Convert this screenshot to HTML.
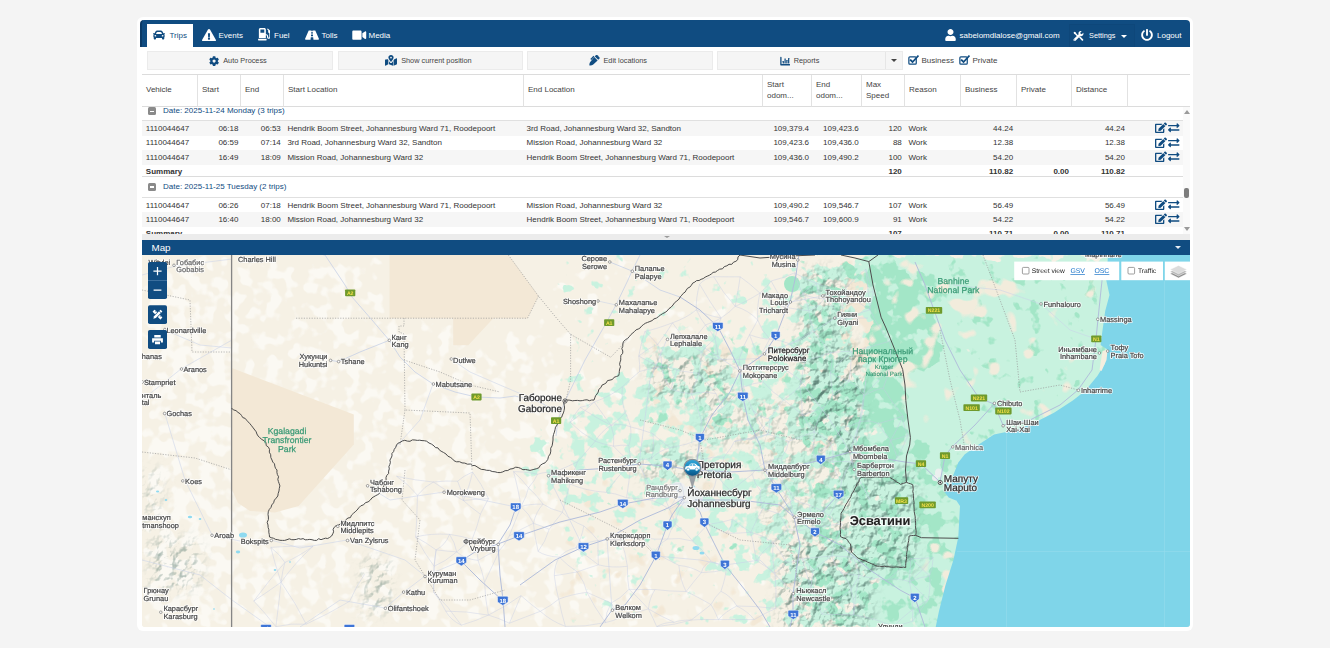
<!DOCTYPE html>
<html lang="en">
<head>
<meta charset="utf-8">
<title>Trips</title>
<style>
*{box-sizing:border-box;margin:0;padding:0}
html,body{width:1330px;height:648px;overflow:hidden;background:#f4f4f4;font-family:"Liberation Sans",Arial,sans-serif;font-size:8px;color:#333}
.abs{position:absolute}
#card{position:absolute;left:137px;top:17px;width:1056px;height:614px;background:#fff;border-radius:6px}
#hdr{position:absolute;left:140px;top:20px;width:1050px;height:27px;background:#104c81;border-radius:4px 4px 0 0;border-left:2px solid #0b3a66}
.tab{position:absolute;top:24px;height:23px;color:#fff;font-size:8px;line-height:23px;white-space:nowrap}
.tab.act{background:#fff;color:#104c81;left:147px;width:46px}
.tab svg{position:absolute}
.tab span{position:absolute;top:0}
.tbtn{position:absolute;top:51px;height:19px;padding-right:4px;background:#f5f5f5;border:1px solid #ebebeb;font-size:7.33px;line-height:17px;color:#444;text-align:center;white-space:nowrap}
.tbtn svg{vertical-align:-2px;margin-right:5px}
#grid{position:absolute;left:142px;top:74px;width:1048px;height:160px;overflow:hidden;background:#fff;border-top:1px solid #dcdcdc}
.gh{position:absolute;top:0;height:32px;padding-bottom:1.5px;border-right:1px solid #e2e2e2;border-bottom:1px solid #dcdcdc;font-size:8px;color:#444;padding-left:4px;display:flex;align-items:center;line-height:11px}
.row{position:absolute;left:0;width:1041px;height:15px;font-size:8px;line-height:15px;color:#333;white-space:nowrap}
.row.alt{background:#f6f6f6}
.row span{position:absolute;top:0}
.r{text-align:right}
.grp{position:absolute;left:0;width:1041px;color:#104c81;font-size:8px;border-bottom:1px solid #e0e0e0}
.sum{font-weight:bold}
.ic{position:absolute;top:1.2px;width:12px;height:11.5px;fill:#104c81;color:#104c81}
.minus{position:absolute;left:6px;width:8px;height:8px;background:#8a8a8a;border-radius:1.5px}
.minus:after{content:"";position:absolute;left:1.8px;top:3.2px;width:4.4px;height:1.6px;background:#fff}
.tic{position:absolute;fill:currentColor;color:inherit}
.mbtn{position:absolute;left:148px;width:19px;height:18px;background:#104c81;border-radius:1.5px}
</style>
</head>
<body>
<svg width="0" height="0" style="position:absolute">
<defs>
<path id="i-car" d="M499.990 176h-59.870l-16.640-41.600C406.380 91.630 365.570 64 319.500 64h-127c-46.060 0-86.880 27.630-103.990 70.400L71.870 176H12.010C4.200 176-1.530 183.340.370 190.910l6 24C7.700 220.250 12.500 224 18.010 224h20.070C24.650 235.730 16 252.780 16 272v48c0 16.120 6.160 30.670 16 41.930V416c0 17.670 14.330 32 32 32h32c17.670 0 32-14.330 32-32v-32h256v32c0 17.670 14.330 32 32 32h32c17.670 0 32-14.330 32-32v-54.070c9.840-11.250 16-25.800 16-41.930v-48c0-19.220-8.650-36.270-22.070-48H494c5.510 0 10.310-3.750 11.640-9.090l6-24c1.890-7.570-3.840-14.910-11.650-14.910zm-352.060-17.830c7.290-18.220 24.940-30.170 44.570-30.170h127c19.630 0 37.280 11.950 44.570 30.170L384 208H128l19.930-49.830zM96 319.800c-19.200 0-32-12.760-32-31.900S76.800 256 96 256s48 28.710 48 47.850-28.800 15.950-48 15.950zm320 0c-19.200 0-48 3.190-48-15.950S396.800 256 416 256s32 12.760 32 31.900-12.800 31.900-32 31.900z"/>
<path id="i-warn" d="M569.517 440.013C587.975 472.007 564.806 512 527.940 512H48.054c-36.937 0-59.999-40.055-41.577-71.987L246.423 23.985c18.467-32.009 64.720-31.951 83.154 0l239.940 416.028zM288 354c-25.405 0-46 20.595-46 46s20.595 46 46 46 46-20.595 46-46-20.595-46-46-46zm-43.673-165.346l7.418 136c.347 6.364 5.609 11.346 11.982 11.346h48.546c6.373 0 11.635-4.982 11.982-11.346l7.418-136c.375-6.874-5.098-12.654-11.982-12.654h-63.383c-6.884 0-12.356 5.780-11.981 12.654z"/>
<path id="i-fuel" d="M336 448H16c-8.800 0-16 7.200-16 16v32c0 8.800 7.200 16 16 16h320c8.800 0 16-7.200 16-16v-32c0-8.800-7.200-16-16-16zm157.200-340.700l-81-81c-6.200-6.200-16.400-6.200-22.600 0l-11.300 11.300c-6.200 6.200-6.200 16.400 0 22.600L416 97.900V160c0 28.100 20.900 51.300 48 55.200V376c0 13.200-10.800 24-24 24s-24-10.800-24-24v-32c0-48.600-39.400-88-88-88h-8V64c0-35.300-28.700-64-64-64H96C60.700 0 32 28.700 32 64v352h288V304h8c22.100 0 40 17.900 40 40v27.800c0 37.700 27 72 64.500 75.900 43 4.300 79.500-29.500 79.500-71.700V152.600c0-17-6.800-33.300-18.800-45.300zM256 192H96V64h160v128z"/>
<path id="i-road" d="M573.190 402.670l-139.790-320C428.430 71.290 417.600 64 405.680 64h-97.590l2.450 23.160c.5 4.720-3.210 8.840-7.960 8.840h-29.160c-4.750 0-8.460-4.120-7.960-8.840L267.910 64h-97.590c-11.930 0-22.760 7.290-27.730 18.670L2.800 402.670C-6.450 423.860 8.310 448 30.540 448h196.840l10.310-97.680c.86-8.140 7.720-14.320 15.910-14.320h68.800c8.190 0 15.050 6.180 15.910 14.320L348.620 448h196.840c22.230 0 36.990-24.140 27.730-45.330zM260.400 135.160a8 8 0 0 1 7.960-7.160h39.290c4.090 0 7.530 3.090 7.960 7.160l4.600 43.580c.75 7.090-4.810 13.260-11.930 13.260h-40.540c-7.130 0-12.680-6.170-11.930-13.260l4.590-43.580zM315.640 304h-55.290c-9.500 0-16.910-8.230-15.910-17.680l5.070-48c.86-8.140 7.720-14.320 15.910-14.320h45.150c8.190 0 15.050 6.180 15.910 14.320l5.070 48c1 9.450-6.410 17.680-15.910 17.680z"/>
<path id="i-video" d="M336.200 64H47.800C21.400 64 0 85.400 0 111.800v288.400C0 426.600 21.400 448 47.800 448h288.400c26.400 0 47.800-21.400 47.800-47.800V111.800c0-26.400-21.400-47.800-47.800-47.800zm189.400 37.700L416 177.300v157.400l109.600 75.500c21.200 14.600 50.400-.3 50.400-25.800V127.500c0-25.400-29.100-40.400-50.400-25.800z"/>
<path id="i-user" d="M224 256c70.700 0 128-57.300 128-128S294.700 0 224 0 96 57.300 96 128s57.300 128 128 128zm89.600 32h-16.700c-22.200 10.200-46.900 16-72.900 16s-50.600-5.800-72.900-16h-16.700C60.200 288 0 348.200 0 422.400V464c0 26.500 21.500 48 48 48h352c26.500 0 48-21.500 48-48v-41.600c0-74.200-60.200-134.400-134.400-134.400z"/>
<path id="i-power" d="M400 54.100c63 45 104 118.600 104 201.900 0 136.800-110.800 247.700-247.500 248C120 504.300 8.200 393 8 256.400 7.900 173.100 48.900 99.300 111.800 54.200c11.700-8.300 28-4.800 35 7.700L162.600 90c5.900 10.500 3.100 23.800-6.600 31-41.500 30.800-68 79.600-68 134.900-.1 92.300 74.500 168.100 168 168.100 91.600 0 168.600-74.200 168-169.100-.3-51.800-24.700-101.800-68.100-134-9.700-7.200-12.400-20.500-6.500-30.900l15.800-28.100c7-12.400 23.200-16.100 34.800-7.800zM296 264V24c0-13.300-10.700-24-24-24h-32c-13.300 0-24 10.700-24 24v240c0 13.300 10.700 24 24 24h32c13.300 0 24-10.700 24-24z"/>
<path id="i-cog" d="M487.400 315.700l-42.600-24.600c4.300-23.200 4.300-47 0-70.200l42.600-24.600c4.900-2.800 7.100-8.600 5.500-14-11.100-35.600-30-67.800-54.700-94.600-3.800-4.100-10-5.100-14.800-2.300L380.800 110c-17.900-15.400-38.500-27.300-60.800-35.100V25.800c0-5.600-3.900-10.500-9.400-11.700-36.700-8.200-74.300-7.800-109.200 0-5.500 1.200-9.400 6.100-9.400 11.700V75c-22.200 7.900-42.800 19.800-60.800 35.100L88.700 85.500c-4.900-2.800-11-1.900-14.800 2.300-24.700 26.700-43.600 58.900-54.700 94.600-1.700 5.400.6 11.200 5.500 14L67.300 221c-4.300 23.200-4.300 47 0 70.200l-42.600 24.600c-4.900 2.800-7.100 8.600-5.500 14 11.100 35.600 30 67.800 54.700 94.600 3.800 4.100 10 5.100 14.800 2.300l42.600-24.600c17.900 15.400 38.500 27.300 60.800 35.100v49.200c0 5.600 3.900 10.500 9.400 11.700 36.700 8.200 74.300 7.800 109.200 0 5.500-1.200 9.400-6.100 9.400-11.700v-49.200c22.200-7.900 42.800-19.800 60.800-35.100l42.600 24.600c4.900 2.800 11 1.900 14.800-2.300 24.700-26.700 43.600-58.900 54.700-94.600 1.500-5.500-.7-11.300-5.600-14.100zM256 336c-44.100 0-80-35.900-80-80s35.900-80 80-80 80 35.900 80 80-35.900 80-80 80z"/>
<path id="i-swap" d="M0 168v-16c0-13.255 10.745-24 24-24h360V80c0-21.367 25.899-32.042 40.971-16.971l80 80c9.372 9.373 9.372 24.569 0 33.941l-80 80C409.956 271.982 384 261.456 384 240v-48H24c-13.255 0-24-10.745-24-24zm488 152H128v-48c0-21.314-25.862-32.080-40.971-16.971l-80 80c-9.372 9.373-9.372 24.569 0 33.941l80 80C102.057 463.997 128 453.437 128 432v-48h360c13.255 0 24-10.745 24-24v-16c0-13.255-10.745-24-24-24z"/>
<path id="i-edit" d="M402.600 83.200l90.200 90.200c3.800 3.800 3.800 10 0 13.800L274.400 405.600l-92.800 10.300c-12.400 1.400-22.900-9.100-21.500-21.500l10.300-92.800L388.800 83.200c3.800-3.800 10-3.800 13.800 0zm162-22.900l-48.800-48.800c-15.200-15.200-39.900-15.200-55.200 0l-35.400 35.400c-3.800 3.800-3.800 10 0 13.800l90.200 90.200c3.800 3.800 10 3.800 13.800 0l35.400-35.400c15.200-15.300 15.200-40 0-55.200zM384 346.200V448H64V128h229.800c3.200 0 6.200-1.300 8.500-3.500l40-40c7.600-7.600 2.200-20.500-8.500-20.500H48C21.500 64 0 85.500 0 112v352c0 26.500 21.500 48 48 48h352c26.500 0 48-21.500 48-48V306.200c0-10.700-12.900-16-20.500-8.500l-40 40c-2.200 2.300-3.500 5.300-3.500 8.500z"/>
<g id="i-check"><rect x="30" y="90" width="360" height="360" rx="50" fill="none" stroke="currentColor" stroke-width="60"/><path d="M120 250l90 90L470 60" fill="none" stroke="currentColor" stroke-width="85" stroke-linecap="square"/></g>
<g id="i-chart"><path d="M45 70v370h430" fill="none" stroke="currentColor" stroke-width="66" stroke-linecap="round" stroke-linejoin="round"/><rect x="135" y="250" width="62" height="125" rx="10"/><rect x="225" y="120" width="62" height="255" rx="10"/><rect x="315" y="200" width="62" height="175" rx="10"/><rect x="405" y="100" width="62" height="275" rx="10"/></g>
<g id="i-tools"><path d="M60 40l70 20 30 60 130 130-50 50L110 170 50 140 30 70z"/><path d="M290 300l50-50 150 150c18 18 18 42 0 60s-42 18-60 0z"/><path d="M500 90l-70 70-60-20-20-60 70-70c-50-15-110 0-140 50-18 30-20 70-5 100L40 395c-25 25-25 60 0 82s57 25 82 0l235-235c30 15 70 13 100-5 50-30 62-95 43-147zM80 460a22 22 0 1 1 0-44 22 22 0 0 1 0 44z"/></g>
<g id="i-mapm"><path d="M288 0c-70 0-126 56-126 126 0 56 82 158 113 196 7 8 19 8 26 0 31-38 113-140 113-196C414 56 358 0 288 0zm0 168a42 42 0 1 1 0-84 42 42 0 0 1 0 84z"/><path d="M20 216c-12 5-20 17-20 30v250c0 11 11 19 22 15l138-63V236l-20-30zM192 300v148l192 64V300c-20 27-40 52-55 70-21 25-61 25-82 0-15-18-35-43-55-70zM554 161l-122 55c-5 18-13 36-23 54v242l147-59c12-5 20-17 20-30V176c0-11-11-19-22-15z"/></g>
<g id="i-pen"><path d="M497 105L407 15c-20-20-52-20-72 0l-55 55 162 162 55-55c20-20 20-52 0-72z"/><path d="M252 98L414 260 205 455c-45 40-110 60-185 50-10-75 10-140 50-185z"/><path d="M215 40l45 45L110 235l-45-45L190 65z"/></g>
</defs>
</svg>

<div id="card"></div>
<div id="hdr"></div>

<!-- tabs -->
<div class="tab act"><svg class="tic" style="left:6.2px;top:5.0px;width:12px;height:12px" viewBox="0 0 512 512"><use href="#i-car"/></svg><span style="left:22.5px">Trips</span></div>
<div class="tab" style="left:200px"><svg class="tic" style="left:2px;top:4.6px;width:14px;height:12.4px" viewBox="0 0 576 512"><use href="#i-warn"/></svg><span style="left:18.5px">Events</span></div>
<div class="tab" style="left:255px"><svg class="tic" style="left:2.6px;top:4.4px;width:12.6px;height:12.4px" viewBox="0 0 512 512"><use href="#i-fuel"/></svg><span style="left:19px">Fuel</span></div>
<div class="tab" style="left:302px"><svg class="tic" style="left:2.7px;top:5.3px;width:14px;height:12.4px" viewBox="0 0 576 512"><use href="#i-road"/></svg><span style="left:19.5px">Tolls</span></div>
<div class="tab" style="left:350px"><svg class="tic" style="left:2px;top:5.3px;width:14.5px;height:12.4px" viewBox="0 0 576 512"><use href="#i-video"/></svg><span style="left:18.5px">Media</span></div>
<div class="tab" style="left:944px"><svg class="tic" style="left:0.5px;top:4.8px;width:11px;height:12px" viewBox="0 0 448 512"><use href="#i-user"/></svg><span style="left:15.5px">sabelomdlalose@gmail.com</span></div>
<div class="tab" style="left:1069px;width:66px;background:#0f4a7e;border:1px solid #0e477a;border-bottom:0"><svg class="tic" style="left:3.3px;top:5.5px;width:10.5px;height:10.5px" viewBox="0 0 512 512"><use href="#i-tools"/></svg><i style="position:absolute;left:51px;top:9.5px;border:3.2px solid transparent;border-top:3.6px solid #fff;border-bottom:0"></i><span style="left:19px;font-size:7.33px;top:-1px">Settings</span></div>
<div class="tab" style="left:1140px"><svg class="tic" style="left:1px;top:4.6px;width:12px;height:12px" viewBox="0 0 512 512"><use href="#i-power"/></svg><span style="left:17px">Logout</span></div>

<!-- toolbar -->
<div class="tbtn" style="left:147px;width:186px"><svg style="width:10.2px;height:10.2px;fill:#104c81;color:#104c81;vertical-align:-2.7px;margin-right:3.8px" viewBox="0 0 512 512"><use href="#i-cog"/></svg>Auto Process</div>
<div class="tbtn" style="left:338px;width:185px"><svg style="width:12px;height:10.67px;fill:#104c81;color:#104c81;vertical-align:-2.7px;margin-right:3.8px" viewBox="0 0 576 512"><use href="#i-mapm"/></svg>Show current position</div>
<div class="tbtn" style="left:527px;width:186px"><svg style="width:10.67px;height:10.67px;fill:#104c81;color:#104c81;vertical-align:-2.7px;margin-right:3.8px" viewBox="0 0 512 512"><use href="#i-pen"/></svg>Edit locations</div>
<div class="tbtn" style="left:717px;width:186px;padding-right:21px"><svg style="width:10.2px;height:10.2px;fill:#104c81;color:#104c81;vertical-align:-2.7px;margin-right:3.8px" viewBox="0 0 512 512"><use href="#i-chart"/></svg>Reports</div>
<div class="abs" style="left:885px;top:52px;width:1px;height:17px;background:#e6e6e6"></div>
<i class="abs" style="left:891px;top:59px;border:3px solid transparent;border-top:3.6px solid #444;border-bottom:0"></i>
<svg class="abs" style="left:907.5px;top:55.2px;width:11px;height:10.5px;color:#104c81" viewBox="0 0 512 512"><use href="#i-check"/></svg>
<svg class="abs" style="left:959px;top:55.2px;width:11px;height:10.5px;color:#104c81" viewBox="0 0 512 512"><use href="#i-check"/></svg>
<div class="abs" style="left:921.5px;top:51px;line-height:19px;font-size:8px;color:#444">Business</div>
<div class="abs" style="left:972.5px;top:51px;line-height:19px;font-size:8px;color:#444">Private</div>

<!-- grid -->
<div id="grid">
  <div class="gh" style="left:0;width:56px">Vehicle</div>
  <div class="gh" style="left:56px;width:43px">Start</div>
  <div class="gh" style="left:99px;width:43px">End</div>
  <div class="gh" style="left:142px;width:240px">Start Location</div>
  <div class="gh" style="left:382px;width:239px">End Location</div>
  <div class="gh" style="left:621px;width:49px">Start<br>odom...</div>
  <div class="gh" style="left:670px;width:50px">End<br>odom...</div>
  <div class="gh" style="left:720px;width:43px">Max<br>Speed</div>
  <div class="gh" style="left:763px;width:56px">Reason</div>
  <div class="gh" style="left:819px;width:56px">Business</div>
  <div class="gh" style="left:875px;width:55px">Private</div>
  <div class="gh" style="left:930px;width:56px">Distance</div>
  <div class="gh" style="left:986px;width:62px;border-right:0"></div>
<div class="grp" style="top:32.00px;height:13.67px"><i class="minus" style="top:0.40px"></i><span style="position:absolute;left:21px;top:-0.70px;line-height:10px">Date: 2025-11-24 Monday (3 trips)</span></div>
<div class="row alt" style="top:45.67px"><span style="left:3.8px">1110044647</span><span class="r" style="right:944.6px">06:18</span><span class="r" style="right:902.2px">06:53</span><span style="left:145.4px">Hendrik Boom Street, Johannesburg Ward 71, Roodepoort</span><span style="left:384.5px">3rd Road, Johannesburg Ward 32, Sandton</span><span class="r" style="right:374.0px">109,379.4</span><span class="r" style="right:324.3px">109,423.6</span><span class="r" style="right:281.2px">120</span><span style="left:766.4px">Work</span><span class="r" style="right:169.9px">44.24</span><span class="r" style="right:58.1px">44.24</span><svg class="ic" style="left:1012.5px" viewBox="0 0 576 512"><use href="#i-edit"/></svg><svg class="ic" style="left:1026.2px;width:11.5px" viewBox="0 0 512 512"><use href="#i-swap"/></svg></div>
<div class="row" style="top:60.33px"><span style="left:3.8px">1110044647</span><span class="r" style="right:944.6px">06:59</span><span class="r" style="right:902.2px">07:14</span><span style="left:145.4px">3rd Road, Johannesburg Ward 32, Sandton</span><span style="left:384.5px">Mission Road, Johannesburg Ward 32</span><span class="r" style="right:374.0px">109,423.6</span><span class="r" style="right:324.3px">109,436.0</span><span class="r" style="right:281.2px">88</span><span style="left:766.4px">Work</span><span class="r" style="right:169.9px">12.38</span><span class="r" style="right:58.1px">12.38</span><svg class="ic" style="left:1012.5px" viewBox="0 0 576 512"><use href="#i-edit"/></svg><svg class="ic" style="left:1026.2px;width:11.5px" viewBox="0 0 512 512"><use href="#i-swap"/></svg></div>
<div class="row alt" style="top:75.00px"><span style="left:3.8px">1110044647</span><span class="r" style="right:944.6px">16:49</span><span class="r" style="right:902.2px">18:09</span><span style="left:145.4px">Mission Road, Johannesburg Ward 32</span><span style="left:384.5px">Hendrik Boom Street, Johannesburg Ward 71, Roodepoort</span><span class="r" style="right:374.0px">109,436.0</span><span class="r" style="right:324.3px">109,490.2</span><span class="r" style="right:281.2px">100</span><span style="left:766.4px">Work</span><span class="r" style="right:169.9px">54.20</span><span class="r" style="right:58.1px">54.20</span><svg class="ic" style="left:1012.5px" viewBox="0 0 576 512"><use href="#i-edit"/></svg><svg class="ic" style="left:1026.2px;width:11.5px" viewBox="0 0 512 512"><use href="#i-swap"/></svg></div>
<div class="row sum" style="top:89.67px;height:12.67px;line-height:13px;border-bottom:1px solid #dcdcdc"><span style="left:3.8px">Summary</span><span class="r" style="right:281.2px">120</span><span class="r" style="right:169.9px">110.82</span><span class="r" style="right:114.0px">0.00</span><span class="r" style="right:58.1px">110.82</span></div>
<div class="grp" style="top:102.33px;height:20.67px"><i class="minus" style="top:5.97px"></i><span style="position:absolute;left:21px;top:4.87px;line-height:10px">Date: 2025-11-25 Tuesday (2 trips)</span></div>
<div class="row" style="top:122.60px"><span style="left:3.8px">1110044647</span><span class="r" style="right:944.6px">06:26</span><span class="r" style="right:902.2px">07:18</span><span style="left:145.4px">Hendrik Boom Street, Johannesburg Ward 71, Roodepoort</span><span style="left:384.5px">Mission Road, Johannesburg Ward 32</span><span class="r" style="right:374.0px">109,490.2</span><span class="r" style="right:324.3px">109,546.7</span><span class="r" style="right:281.2px">107</span><span style="left:766.4px">Work</span><span class="r" style="right:169.9px">56.49</span><span class="r" style="right:58.1px">56.49</span><svg class="ic" style="left:1012.5px" viewBox="0 0 576 512"><use href="#i-edit"/></svg><svg class="ic" style="left:1026.2px;width:11.5px" viewBox="0 0 512 512"><use href="#i-swap"/></svg></div>
<div class="row alt" style="top:137.20px"><span style="left:3.8px">1110044647</span><span class="r" style="right:944.6px">16:40</span><span class="r" style="right:902.2px">18:00</span><span style="left:145.4px">Mission Road, Johannesburg Ward 32</span><span style="left:384.5px">Hendrik Boom Street, Johannesburg Ward 71, Roodepoort</span><span class="r" style="right:374.0px">109,546.7</span><span class="r" style="right:324.3px">109,600.9</span><span class="r" style="right:281.2px">91</span><span style="left:766.4px">Work</span><span class="r" style="right:169.9px">54.22</span><span class="r" style="right:58.1px">54.22</span><svg class="ic" style="left:1012.5px" viewBox="0 0 576 512"><use href="#i-edit"/></svg><svg class="ic" style="left:1026.2px;width:11.5px" viewBox="0 0 512 512"><use href="#i-swap"/></svg></div>
<div class="row sum" style="top:152.00px;height:12.67px;line-height:13px;border-bottom:1px solid #dcdcdc"><span style="left:3.8px">Summary</span><span class="r" style="right:281.2px">107</span><span class="r" style="right:169.9px">110.71</span><span class="r" style="right:114.0px">0.00</span><span class="r" style="right:58.1px">110.71</span></div>
<div class="abs" style="left:1041px;top:32px;width:7px;height:128px;background:#fafafa"></div><i class="abs" style="left:1041.6px;top:34.6px;border:3px solid transparent;border-bottom:4px solid #9a9a9a;border-top:0"></i><i class="abs" style="left:1041.6px;top:152px;border:3px solid transparent;border-top:4px solid #9a9a9a;border-bottom:0"></i><div class="abs" style="left:1042px;top:113px;width:5px;height:10px;background:#7d7d7d;border-radius:2px"></div>
</div>

<!-- splitter + map header -->
<div class="abs" style="left:142px;top:234px;width:1048px;height:6px;background:#ececec"></div>
<div class="abs" style="left:142px;top:240px;width:1048px;height:15px;background:#104c81;color:#fff;font-size:9.8px;line-height:15.6px;padding-left:9.5px">Map</div>

<!-- map -->
<div id="map" class="abs" style="opacity:.999;left:142px;top:255px;width:1048px;height:372px;background:#f5f1e6;overflow:hidden;border-radius:0 0 3px 3px"><svg width="1048" height="372" viewBox="142 255 1048 372" style="position:absolute;left:0;top:0;text-rendering:geometricPrecision;font-family:'Liberation Sans',Arial,sans-serif">
<defs>
<filter id="fpale" filterUnits="userSpaceOnUse" x="142" y="255" width="1048" height="372" color-interpolation-filters="sRGB">
<feGaussianBlur in="SourceGraphic" stdDeviation="8" result="d"/>
<feTurbulence type="fractalNoise" baseFrequency="0.075" numOctaves="2" seed="3" result="n"/>
<feColorMatrix in="n" type="matrix" values="0 0 0 0 0 0 0 0 0 0 0 0 0 0 0 1 0 0 0 0" result="na"/>
<feComposite in="na" in2="d" operator="arithmetic" k1="0" k2="1" k3="1" k4="-0.5" result="s"/>
<feComponentTransfer in="s" result="t"><feFuncA type="linear" slope="8" intercept="-3.5"/></feComponentTransfer>
<feFlood flood-color="#fbf9f3" flood-opacity="1" result="f"/>
<feComposite in="f" in2="t" operator="in"/>
</filter>
<filter id="flg" filterUnits="userSpaceOnUse" x="142" y="255" width="1048" height="372" color-interpolation-filters="sRGB">
<feGaussianBlur in="SourceGraphic" stdDeviation="7" result="d"/>
<feTurbulence type="fractalNoise" baseFrequency="0.075" numOctaves="3" seed="11" result="n"/>
<feColorMatrix in="n" type="matrix" values="0 0 0 0 0 0 0 0 0 0 0 0 0 0 0 1 0 0 0 0" result="na"/>
<feComposite in="na" in2="d" operator="arithmetic" k1="0" k2="1" k3="1" k4="-0.5" result="s"/>
<feComponentTransfer in="s" result="t"><feFuncA type="linear" slope="11" intercept="-5.0"/></feComponentTransfer>
<feFlood flood-color="#c8f2df" flood-opacity="1" result="f"/>
<feComposite in="f" in2="t" operator="in"/>
</filter>
<filter id="fmg" filterUnits="userSpaceOnUse" x="142" y="255" width="1048" height="372" color-interpolation-filters="sRGB">
<feGaussianBlur in="SourceGraphic" stdDeviation="6" result="d"/>
<feTurbulence type="fractalNoise" baseFrequency="0.07" numOctaves="3" seed="23" result="n"/>
<feColorMatrix in="n" type="matrix" values="0 0 0 0 0 0 0 0 0 0 0 0 0 0 0 1 0 0 0 0" result="na"/>
<feComposite in="na" in2="d" operator="arithmetic" k1="0" k2="1" k3="1" k4="-0.5" result="s"/>
<feComponentTransfer in="s" result="t"><feFuncA type="linear" slope="11" intercept="-5.0"/></feComponentTransfer>
<feFlood flood-color="#a3e6c7" flood-opacity="1" result="f"/>
<feComposite in="f" in2="t" operator="in"/>
</filter>
<filter id="ftan" filterUnits="userSpaceOnUse" x="142" y="255" width="1048" height="372" color-interpolation-filters="sRGB">
<feGaussianBlur in="SourceGraphic" stdDeviation="6" result="d"/>
<feTurbulence type="fractalNoise" baseFrequency="0.06" numOctaves="2" seed="5" result="n"/>
<feColorMatrix in="n" type="matrix" values="0 0 0 0 0 0 0 0 0 0 0 0 0 0 0 1 0 0 0 0" result="na"/>
<feComposite in="na" in2="d" operator="arithmetic" k1="0" k2="1" k3="1" k4="-0.5" result="s"/>
<feComponentTransfer in="s" result="t"><feFuncA type="linear" slope="10" intercept="-4.5"/></feComponentTransfer>
<feFlood flood-color="#f3e8d6" flood-opacity="1" result="f"/>
<feComposite in="f" in2="t" operator="in"/>
</filter>
<filter id="fhill" filterUnits="userSpaceOnUse" x="142" y="255" width="1048" height="372" color-interpolation-filters="sRGB">
<feGaussianBlur in="SourceGraphic" stdDeviation="6" result="d"/>
<feTurbulence type="fractalNoise" baseFrequency="0.12" numOctaves="4" seed="41" result="n"/>
<feDiffuseLighting in="n" surfaceScale="4.5" diffuseConstant="1" lighting-color="#ffffff" result="l"><feDistantLight azimuth="225" elevation="50"/></feDiffuseLighting>
<feColorMatrix in="l" type="matrix" values="0 0 0 0 0.30 0 0 0 0 0.44 0 0 0 0 0.40 -1.3 0 0 0 0.96" result="sh"/>
<feComposite in="sh" in2="d" operator="in"/>
</filter>
<filter id="ftan2" filterUnits="userSpaceOnUse" x="142" y="255" width="1048" height="372" color-interpolation-filters="sRGB">
<feGaussianBlur in="SourceGraphic" stdDeviation="5" result="d"/>
<feTurbulence type="fractalNoise" baseFrequency="0.05" numOctaves="2" seed="77" result="n"/>
<feColorMatrix in="n" type="matrix" values="0 0 0 0 0 0 0 0 0 0 0 0 0 0 0 1 0 0 0 0" result="na"/>
<feComposite in="na" in2="d" operator="arithmetic" k1="0" k2="1" k3="1" k4="-0.5" result="s"/>
<feComponentTransfer in="s" result="t"><feFuncA type="linear" slope="11" intercept="-5.0"/></feComponentTransfer>
<feFlood flood-color="#f2ecdc" flood-opacity="1" result="f"/>
<feComposite in="f" in2="t" operator="in"/>
</filter>
<linearGradient id="mk" x1="0" y1="0" x2="0" y2="1"><stop offset="0" stop-color="#35a9da"/><stop offset="0.5" stop-color="#1684bb"/><stop offset="1" stop-color="#084f80"/></linearGradient>
</defs>
<rect x="142" y="255" width="1048" height="372" fill="#f6f1e5"/>
<g filter="url(#fpale)">
<path fill="#000" fill-opacity="0.20" d="M638 439h8v8h-8z"/>
<path fill="#000" fill-opacity="0.25" d="M566 439h72v8h-72z"/>
<path fill="#000" fill-opacity="0.30" d="M646 255h8v8h-8zM646 263h8v8h-8zM646 271h8v8h-8zM646 279h8v8h-8zM654 287h120v8h-120zM766 295h8v8h-8zM766 303h8v8h-8zM766 311h8v8h-8zM470 319h72v8h-72zM766 319h8v8h-8zM766 327h8v8h-8zM766 335h8v8h-8zM766 343h8v8h-8zM638 351h8v8h-8zM638 359h8v8h-8zM638 367h8v8h-8zM638 375h8v8h-8zM638 383h8v8h-8zM638 391h8v8h-8zM638 399h8v8h-8zM638 407h8v8h-8zM638 415h8v8h-8zM638 423h8v8h-8zM638 431h8v8h-8zM638 535h144v8h-144zM646 623h136v8h-136z"/>
<path fill="#000" fill-opacity="0.35" d="M542 255h104v8h-104zM542 263h104v8h-104zM542 271h104v8h-104zM542 279h104v8h-104zM542 287h112v8h-112zM542 295h224v8h-224zM542 303h224v8h-224zM542 311h224v8h-224zM542 319h224v8h-224zM470 327h296v8h-296zM470 335h296v8h-296zM558 343h208v8h-208zM566 351h72v8h-72zM566 359h72v8h-72zM566 367h72v8h-72zM566 375h72v8h-72zM566 383h72v8h-72zM566 391h72v8h-72zM566 399h72v8h-72zM566 407h72v8h-72zM566 415h72v8h-72zM566 423h72v8h-72zM566 431h72v8h-72zM566 535h72v8h-72zM638 543h144v8h-144zM638 551h144v8h-144zM638 559h144v8h-144zM638 567h144v8h-144zM638 575h144v8h-144zM638 583h144v8h-144zM638 591h144v8h-144zM638 599h144v8h-144zM638 607h144v8h-144zM638 615h144v8h-144zM638 623h8v8h-8z"/>
<path fill="#000" fill-opacity="0.40" d="M382 255h8v8h-8zM382 263h8v8h-8zM382 271h8v8h-8zM382 279h8v8h-8zM382 287h8v8h-8zM382 295h8v8h-8zM382 303h8v8h-8zM382 311h8v8h-8zM390 319h80v8h-80zM470 343h88v8h-88zM558 351h8v8h-8zM558 359h8v8h-8zM558 367h8v8h-8zM558 375h8v8h-8zM558 383h8v8h-8zM558 391h8v8h-8zM558 399h8v8h-8zM558 407h8v8h-8zM558 415h8v8h-8zM558 423h8v8h-8zM558 431h8v8h-8zM558 439h8v8h-8zM558 447h8v8h-8zM558 455h8v8h-8zM558 463h8v8h-8zM558 471h8v8h-8zM558 479h8v8h-8zM558 487h8v8h-8zM558 495h8v8h-8zM558 503h8v8h-8zM558 511h8v8h-8zM558 519h8v8h-8zM558 527h8v8h-8zM558 535h8v8h-8zM238 623h400v8h-400z"/>
<path fill="#000" fill-opacity="0.45" d="M230 255h152v8h-152zM230 263h152v8h-152zM230 271h152v8h-152zM230 279h152v8h-152zM230 287h152v8h-152zM230 295h152v8h-152zM230 303h152v8h-152zM230 311h152v8h-152zM230 319h160v8h-160zM230 327h240v8h-240zM230 335h240v8h-240zM230 343h240v8h-240zM230 351h328v8h-328zM230 359h328v8h-328zM230 367h328v8h-328zM230 375h328v8h-328zM230 383h328v8h-328zM230 391h328v8h-328zM230 399h328v8h-328zM230 407h328v8h-328zM230 415h328v8h-328zM230 423h328v8h-328zM230 431h328v8h-328zM230 439h328v8h-328zM230 447h328v8h-328zM230 455h328v8h-328zM230 463h328v8h-328zM230 471h328v8h-328zM230 479h328v8h-328zM230 487h328v8h-328zM230 495h328v8h-328zM230 503h328v8h-328zM230 511h328v8h-328zM230 519h328v8h-328zM230 527h328v8h-328zM230 535h328v8h-328zM230 543h408v8h-408zM230 551h408v8h-408zM230 559h408v8h-408zM230 567h408v8h-408zM230 575h408v8h-408zM230 583h408v8h-408zM230 591h408v8h-408zM230 599h408v8h-408zM230 607h408v8h-408zM230 615h408v8h-408zM142 623h96v8h-96z"/>
<path fill="#000" fill-opacity="0.50" d="M142 255h88v8h-88zM142 263h88v8h-88zM142 271h88v8h-88zM142 279h88v8h-88zM142 287h88v8h-88zM142 295h88v8h-88zM142 303h88v8h-88zM142 311h88v8h-88zM142 319h88v8h-88zM142 327h88v8h-88zM142 335h88v8h-88zM142 343h88v8h-88zM142 351h88v8h-88zM142 359h88v8h-88zM142 367h88v8h-88zM142 375h88v8h-88zM142 383h88v8h-88zM142 391h88v8h-88zM142 399h88v8h-88zM142 407h88v8h-88zM142 415h88v8h-88zM142 423h88v8h-88zM142 431h88v8h-88zM142 439h88v8h-88zM142 447h88v8h-88zM142 455h88v8h-88zM142 463h88v8h-88zM142 471h88v8h-88zM142 479h88v8h-88zM142 487h88v8h-88zM142 495h88v8h-88zM142 503h88v8h-88zM142 511h88v8h-88zM142 519h88v8h-88zM142 527h88v8h-88zM142 535h88v8h-88zM142 543h88v8h-88zM142 551h88v8h-88zM142 559h88v8h-88zM142 567h88v8h-88zM142 575h88v8h-88zM142 583h88v8h-88zM142 591h88v8h-88zM142 599h88v8h-88zM142 607h88v8h-88zM142 615h88v8h-88z"/>
</g>
<polygon points="389.5,255.0 508.4,255.0 538.5,296.1 527.5,318.2 493.4,318.2 468.3,345.3 453.2,345.3 453.2,318.2 389.5,318.2" fill="#f3e8d6"/>
<polygon points="231.8,368.0 353.8,414.4 353.8,444.6 298.6,506.0 275.0,512.5 250.0,511.0 238.0,503.0 232.0,490.0" fill="#f3e8d6"/>
<g filter="url(#ftan)">
<path fill="#000" fill-opacity="0.20" d="M870 447h8v8h-8z"/>
<path fill="#000" fill-opacity="0.25" d="M638 335h8v8h-8zM870 383h8v8h-8zM870 391h8v8h-8zM870 399h8v8h-8zM870 407h8v8h-8zM870 415h8v8h-8zM870 423h8v8h-8zM870 431h8v8h-8zM870 439h8v8h-8zM798 455h8v8h-8zM798 463h8v8h-8zM798 471h8v8h-8zM798 479h8v8h-8zM798 487h8v8h-8zM798 495h8v8h-8zM798 503h8v8h-8zM798 511h8v8h-8zM798 519h8v8h-8zM798 527h8v8h-8zM798 535h8v8h-8zM798 543h8v8h-8zM798 551h8v8h-8zM798 559h8v8h-8zM798 567h8v8h-8zM798 575h8v8h-8zM798 583h8v8h-8zM798 591h8v8h-8zM798 599h8v8h-8zM798 607h8v8h-8zM798 615h8v8h-8zM558 623h8v8h-8zM798 623h8v8h-8z"/>
<path fill="#000" fill-opacity="0.30" d="M646 335h192v8h-192zM638 343h8v8h-8zM638 351h8v8h-8zM638 359h8v8h-8zM638 367h8v8h-8zM638 375h8v8h-8zM638 383h8v8h-8zM638 391h8v8h-8zM638 399h8v8h-8zM638 407h8v8h-8zM638 415h8v8h-8zM638 423h8v8h-8zM638 431h8v8h-8zM558 439h248v8h-248zM558 447h312v8h-312zM558 455h240v8h-240zM558 463h240v8h-240zM558 471h240v8h-240zM558 479h240v8h-240zM558 487h240v8h-240zM558 495h240v8h-240zM558 503h240v8h-240zM558 511h240v8h-240zM558 519h240v8h-240zM558 527h240v8h-240zM558 535h240v8h-240zM558 543h240v8h-240zM558 551h240v8h-240zM558 559h240v8h-240zM558 567h240v8h-240zM558 575h240v8h-240zM558 583h240v8h-240zM558 591h240v8h-240zM558 599h240v8h-240zM558 607h240v8h-240zM558 615h240v8h-240zM566 623h232v8h-232z"/>
<path fill="#000" fill-opacity="0.35" d="M646 343h192v8h-192zM646 351h200v8h-200zM646 359h200v8h-200zM646 367h200v8h-200zM646 375h200v8h-200zM878 375h8v8h-8zM646 383h224v8h-224zM646 391h224v8h-224zM646 399h224v8h-224zM646 407h224v8h-224zM646 415h224v8h-224zM646 423h224v8h-224zM646 431h224v8h-224zM806 439h64v8h-64z"/>
<path fill="#000" fill-opacity="0.40" d="M838 255h8v8h-8zM838 263h8v8h-8zM838 271h8v8h-8zM838 279h8v8h-8zM838 287h8v8h-8zM838 295h8v8h-8zM838 303h8v8h-8zM838 311h8v8h-8zM838 319h8v8h-8zM838 327h8v8h-8zM838 335h8v8h-8zM838 343h8v8h-8zM878 351h8v8h-8zM878 359h8v8h-8zM878 367h8v8h-8z"/>
<path fill="#000" fill-opacity="0.45" d="M886 343h16v8h-16zM846 375h8v8h-8z"/>
<path fill="#000" fill-opacity="0.50" d="M878 343h8v8h-8zM846 351h8v8h-8zM846 359h8v8h-8zM846 367h8v8h-8z"/>
<path fill="#000" fill-opacity="0.55" d="M846 343h8v8h-8zM854 375h24v8h-24z"/>
<path fill="#000" fill-opacity="0.60" d="M846 255h56v8h-56zM846 263h56v8h-56zM846 271h56v8h-56zM846 279h56v8h-56zM846 287h56v8h-56zM846 295h56v8h-56zM846 303h56v8h-56zM846 311h56v8h-56zM846 319h56v8h-56zM846 327h56v8h-56zM846 335h56v8h-56zM854 343h24v8h-24zM854 351h24v8h-24zM854 359h24v8h-24zM854 367h24v8h-24z"/>
</g>
<g filter="url(#flg)">
<path fill="#000" fill-opacity="0.20" d="M558 335h8v8h-8zM558 343h8v8h-8zM558 351h8v8h-8zM558 359h8v8h-8zM558 367h8v8h-8z"/>
<path fill="#000" fill-opacity="0.25" d="M638 255h120v8h-120zM638 263h120v8h-120zM638 271h120v8h-120zM638 279h120v8h-120zM638 287h120v8h-120zM638 295h48v8h-48zM638 303h48v8h-48zM638 311h48v8h-48zM638 319h48v8h-48zM638 327h48v8h-48zM566 335h72v8h-72zM566 343h72v8h-72zM566 351h72v8h-72zM566 359h72v8h-72zM566 367h72v8h-72zM518 423h8v8h-8zM558 535h8v8h-8zM558 543h8v8h-8zM558 551h8v8h-8zM558 559h8v8h-8zM558 567h8v8h-8zM558 575h168v8h-168zM558 583h168v8h-168zM558 591h168v8h-168zM558 599h168v8h-168zM558 607h168v8h-168zM558 615h168v8h-168zM558 623h168v8h-168z"/>
<path fill="#000" fill-opacity="0.30" d="M558 255h80v8h-80zM758 255h8v8h-8zM558 263h80v8h-80zM758 263h8v8h-8zM558 271h80v8h-80zM758 271h8v8h-8zM558 279h80v8h-80zM758 279h8v8h-8zM558 287h80v8h-80zM758 287h8v8h-8zM558 295h80v8h-80zM686 295h40v8h-40zM558 303h80v8h-80zM686 303h40v8h-40zM558 311h80v8h-80zM686 311h40v8h-40zM558 319h80v8h-80zM686 319h40v8h-40zM558 327h80v8h-80zM686 327h40v8h-40zM558 375h8v8h-8zM558 383h8v8h-8zM558 391h8v8h-8zM558 399h8v8h-8zM558 407h8v8h-8zM526 423h32v8h-32zM558 503h8v8h-8zM558 511h8v8h-8zM558 519h8v8h-8zM558 527h8v8h-8zM566 535h80v8h-80zM566 543h80v8h-80zM566 551h80v8h-80zM566 559h80v8h-80zM566 567h80v8h-80zM726 575h32v8h-32zM726 583h32v8h-32zM726 591h32v8h-32zM726 599h32v8h-32zM726 607h32v8h-32zM726 615h32v8h-32zM726 623h32v8h-32z"/>
<path fill="#000" fill-opacity="0.35" d="M766 255h32v8h-32zM766 263h32v8h-32zM766 271h32v8h-32zM766 279h32v8h-32zM766 287h32v8h-32zM726 295h32v8h-32zM726 303h32v8h-32zM726 311h32v8h-32zM726 319h32v8h-32zM726 327h32v8h-32zM566 375h32v8h-32zM566 383h32v8h-32zM566 391h32v8h-32zM566 399h32v8h-32zM566 407h32v8h-32zM518 431h8v8h-8zM518 439h8v8h-8zM518 447h8v8h-8zM518 455h8v8h-8zM518 463h8v8h-8zM518 471h8v8h-8zM518 479h8v8h-8zM518 487h8v8h-8zM518 495h120v8h-120zM566 503h72v8h-72zM566 511h72v8h-72zM566 519h72v8h-72zM566 527h72v8h-72zM646 535h72v8h-72zM646 543h72v8h-72zM646 551h72v8h-72zM646 559h72v8h-72zM646 567h72v8h-72z"/>
<path fill="#000" fill-opacity="0.40" d="M854 287h16v8h-16zM758 295h40v8h-40zM854 295h16v8h-16zM758 303h40v8h-40zM854 303h16v8h-16zM758 311h40v8h-40zM854 311h16v8h-16zM758 319h40v8h-40zM854 319h16v8h-16zM758 327h40v8h-40zM854 327h16v8h-16zM638 335h8v8h-8zM854 335h16v8h-16zM638 343h8v8h-8zM854 343h16v8h-16zM638 351h8v8h-8zM854 351h16v8h-16zM638 359h8v8h-8zM854 359h16v8h-16zM638 367h8v8h-8zM854 367h16v8h-16zM598 375h8v8h-8zM854 375h16v8h-16zM598 383h8v8h-8zM598 391h8v8h-8zM598 399h8v8h-8zM598 407h8v8h-8zM526 431h32v8h-32zM526 439h32v8h-32zM526 447h32v8h-32zM526 455h72v8h-72zM526 463h72v8h-72zM526 471h72v8h-72zM526 479h72v8h-72zM526 487h72v8h-72zM638 495h48v8h-48zM638 503h48v8h-48zM638 511h48v8h-48zM638 519h48v8h-48zM638 527h48v8h-48zM718 535h8v8h-8zM718 543h8v8h-8zM718 551h8v8h-8zM718 559h8v8h-8zM718 567h8v8h-8zM758 575h8v8h-8zM758 583h8v8h-8zM758 591h8v8h-8zM758 599h8v8h-8zM758 607h8v8h-8zM758 615h8v8h-8zM758 623h8v8h-8z"/>
<path fill="#000" fill-opacity="0.45" d="M798 255h8v8h-8zM798 263h8v8h-8zM798 271h8v8h-8zM798 279h8v8h-8zM798 287h8v8h-8zM846 287h8v8h-8zM846 295h8v8h-8zM846 303h8v8h-8zM846 311h8v8h-8zM846 319h8v8h-8zM846 327h8v8h-8zM646 335h40v8h-40zM718 335h80v8h-80zM846 335h8v8h-8zM646 343h40v8h-40zM718 343h80v8h-80zM846 343h8v8h-8zM646 351h40v8h-40zM718 351h80v8h-80zM846 351h8v8h-8zM646 359h40v8h-40zM718 359h80v8h-80zM846 359h8v8h-8zM646 367h40v8h-40zM718 367h80v8h-80zM846 367h8v8h-8zM606 375h40v8h-40zM846 375h8v8h-8zM606 383h40v8h-40zM606 391h40v8h-40zM606 399h40v8h-40zM606 407h40v8h-40zM558 415h8v8h-8zM758 415h40v8h-40zM558 423h8v8h-8zM758 423h40v8h-40zM558 431h8v8h-8zM758 431h40v8h-40zM558 439h8v8h-8zM758 439h40v8h-40zM558 447h8v8h-8zM758 447h40v8h-40zM598 455h40v8h-40zM678 455h40v8h-40zM598 463h40v8h-40zM678 463h40v8h-40zM598 471h40v8h-40zM678 471h40v8h-40zM598 479h40v8h-40zM678 479h40v8h-40zM598 487h40v8h-40zM678 487h40v8h-40zM686 495h32v8h-32zM686 503h32v8h-32zM686 511h32v8h-32zM686 519h32v8h-32zM686 527h32v8h-32zM726 535h32v8h-32zM726 543h32v8h-32zM726 551h32v8h-32zM726 559h32v8h-32zM726 567h32v8h-32zM766 575h32v8h-32zM766 583h32v8h-32zM766 591h32v8h-32zM766 599h32v8h-32zM766 607h32v8h-32zM766 615h32v8h-32zM766 623h32v8h-32z"/>
<path fill="#000" fill-opacity="0.50" d="M806 255h56v8h-56zM806 263h56v8h-56zM806 271h64v8h-64zM806 279h64v8h-64zM806 287h40v8h-40zM798 295h8v8h-8zM798 303h8v8h-8zM798 311h8v8h-8zM798 319h8v8h-8zM798 327h8v8h-8zM686 335h32v8h-32zM686 343h32v8h-32zM686 351h32v8h-32zM686 359h32v8h-32zM686 367h32v8h-32zM870 367h8v8h-8zM646 375h152v8h-152zM870 375h8v8h-8zM646 383h152v8h-152zM854 383h16v8h-16zM646 391h152v8h-152zM646 399h152v8h-152zM646 407h152v8h-152zM566 415h192v8h-192zM566 423h192v8h-192zM566 431h192v8h-192zM566 439h192v8h-192zM566 447h192v8h-192zM638 455h40v8h-40zM718 455h80v8h-80zM638 463h40v8h-40zM718 463h80v8h-80zM638 471h40v8h-40zM718 471h80v8h-80zM638 479h40v8h-40zM718 479h80v8h-80zM638 487h40v8h-40zM718 487h80v8h-80zM718 495h80v8h-80zM718 503h80v8h-80zM718 511h80v8h-80zM718 519h80v8h-80zM718 527h80v8h-80zM758 535h40v8h-40zM758 543h40v8h-40zM758 551h40v8h-40zM758 559h40v8h-40zM758 567h40v8h-40z"/>
<path fill="#000" fill-opacity="0.55" d="M862 255h8v8h-8zM862 263h8v8h-8zM806 295h40v8h-40zM806 303h40v8h-40zM806 311h40v8h-40zM806 319h40v8h-40zM806 327h40v8h-40zM798 335h8v8h-8zM870 335h8v8h-8zM798 343h8v8h-8zM870 343h8v8h-8zM798 351h8v8h-8zM870 351h8v8h-8zM798 359h8v8h-8zM870 359h8v8h-8zM798 367h8v8h-8zM846 383h8v8h-8zM798 415h40v8h-40zM798 423h40v8h-40zM798 431h40v8h-40zM798 439h40v8h-40zM798 447h40v8h-40zM798 455h40v8h-40zM798 463h40v8h-40zM798 471h40v8h-40zM798 479h40v8h-40zM798 487h40v8h-40zM798 495h40v8h-40zM798 503h40v8h-40zM798 511h40v8h-40zM798 519h40v8h-40zM798 527h40v8h-40zM798 535h40v8h-40zM798 543h40v8h-40zM798 551h40v8h-40zM798 559h40v8h-40zM798 567h40v8h-40zM798 575h8v8h-8zM798 583h8v8h-8zM798 591h8v8h-8zM798 599h8v8h-8zM798 607h8v8h-8zM798 615h8v8h-8zM798 623h8v8h-8z"/>
<path fill="#000" fill-opacity="0.60" d="M870 303h8v8h-8zM870 311h8v8h-8zM870 319h8v8h-8zM870 327h8v8h-8zM806 335h40v8h-40zM806 343h40v8h-40zM806 351h40v8h-40zM806 359h40v8h-40zM806 367h40v8h-40zM798 375h40v8h-40zM798 383h40v8h-40zM870 383h8v8h-8zM798 391h40v8h-40zM798 399h40v8h-40zM798 407h40v8h-40zM838 495h8v8h-8zM838 503h8v8h-8zM838 511h8v8h-8zM838 519h8v8h-8zM838 527h8v8h-8zM838 535h8v8h-8zM838 543h8v8h-8zM838 551h8v8h-8zM838 559h8v8h-8zM838 567h8v8h-8zM806 575h32v8h-32zM806 583h32v8h-32zM806 591h32v8h-32zM806 599h32v8h-32zM806 607h32v8h-32zM806 615h32v8h-32zM806 623h32v8h-32z"/>
<path fill="#000" fill-opacity="0.65" d="M838 375h8v8h-8zM838 383h8v8h-8zM838 391h40v8h-40zM838 399h40v8h-40zM838 407h40v8h-40zM838 415h40v8h-40zM838 423h40v8h-40zM838 431h40v8h-40zM838 439h40v8h-40zM838 447h40v8h-40zM838 455h40v8h-40zM838 463h40v8h-40zM838 471h40v8h-40zM838 479h40v8h-40zM838 487h40v8h-40zM846 495h32v8h-32zM846 503h32v8h-32zM846 511h32v8h-32zM846 519h32v8h-32zM846 527h32v8h-32zM846 535h32v8h-32zM846 543h32v8h-32zM846 551h32v8h-32zM846 559h32v8h-32zM846 567h32v8h-32zM838 575h40v8h-40zM838 583h40v8h-40zM838 591h40v8h-40zM838 599h40v8h-40zM838 607h40v8h-40zM838 615h40v8h-40zM838 623h40v8h-40z"/>
<path fill="#000" fill-opacity="0.70" d="M870 295h8v8h-8zM878 495h8v8h-8zM878 503h8v8h-8zM878 511h8v8h-8zM878 519h8v8h-8zM878 527h8v8h-8zM878 535h8v8h-8zM878 543h8v8h-8zM878 551h8v8h-8zM878 559h8v8h-8zM878 567h8v8h-8z"/>
<path fill="#000" fill-opacity="0.75" d="M878 423h8v8h-8zM878 431h8v8h-8zM878 439h8v8h-8zM878 447h8v8h-8zM878 455h8v8h-8zM878 463h8v8h-8zM878 471h8v8h-8zM878 479h8v8h-8zM878 487h8v8h-8zM878 575h8v8h-8zM878 583h8v8h-8zM878 591h8v8h-8zM878 599h8v8h-8zM878 607h8v8h-8zM878 615h8v8h-8zM878 623h8v8h-8z"/>
<path fill="#000" fill-opacity="0.90" d="M870 255h320v8h-320zM870 263h320v8h-320zM870 271h320v8h-320zM870 279h320v8h-320zM870 287h320v8h-320zM878 295h312v8h-312zM878 303h312v8h-312zM878 311h312v8h-312zM878 319h312v8h-312zM878 327h312v8h-312zM878 335h312v8h-312zM878 343h312v8h-312zM878 351h312v8h-312zM878 359h312v8h-312zM878 367h312v8h-312zM878 375h312v8h-312zM878 383h312v8h-312zM878 391h312v8h-312zM878 399h312v8h-312zM878 407h312v8h-312zM878 415h312v8h-312zM886 423h304v8h-304zM886 431h304v8h-304zM886 439h304v8h-304zM886 447h304v8h-304zM886 455h304v8h-304zM886 463h304v8h-304zM886 471h304v8h-304zM886 479h304v8h-304zM886 487h304v8h-304zM886 495h304v8h-304zM886 503h304v8h-304zM886 511h304v8h-304zM886 519h304v8h-304zM886 527h304v8h-304zM886 535h304v8h-304zM886 543h304v8h-304zM886 551h304v8h-304zM886 559h304v8h-304zM886 567h304v8h-304zM886 575h304v8h-304zM886 583h304v8h-304zM886 591h304v8h-304zM886 599h304v8h-304zM886 607h304v8h-304zM886 615h304v8h-304zM886 623h304v8h-304z"/>
</g>
<g filter="url(#fmg)">
<path fill="#000" fill-opacity="0.05" d="M598 559h200v8h-200z"/>
<path fill="#000" fill-opacity="0.20" d="M598 439h200v8h-200zM1110 439h8v8h-8zM598 447h200v8h-200zM598 455h200v8h-200zM598 463h200v8h-200zM598 471h200v8h-200zM598 479h200v8h-200zM598 487h200v8h-200zM598 495h200v8h-200zM598 503h200v8h-200zM598 511h200v8h-200zM598 519h200v8h-200zM598 527h200v8h-200zM598 535h200v8h-200zM598 543h200v8h-200zM598 551h200v8h-200z"/>
<path fill="#000" fill-opacity="0.25" d="M934 263h8v8h-8zM638 335h160v8h-160zM638 343h8v8h-8zM638 351h8v8h-8zM638 359h8v8h-8zM638 367h8v8h-8zM638 375h8v8h-8zM638 383h8v8h-8zM638 391h8v8h-8zM638 399h8v8h-8zM638 407h8v8h-8zM638 415h8v8h-8zM638 423h8v8h-8zM638 431h8v8h-8zM966 439h144v8h-144z"/>
<path fill="#000" fill-opacity="0.30" d="M974 255h144v8h-144zM974 263h144v8h-144zM974 271h144v8h-144zM950 279h168v8h-168zM950 287h168v8h-168zM862 295h8v8h-8zM950 295h168v8h-168zM862 303h8v8h-8zM950 303h168v8h-168zM950 311h168v8h-168zM950 319h168v8h-168zM950 327h168v8h-168zM950 335h168v8h-168zM646 343h152v8h-152zM950 343h168v8h-168zM646 351h152v8h-152zM950 351h168v8h-168zM646 359h152v8h-152zM950 359h168v8h-168zM646 367h152v8h-152zM950 367h168v8h-168zM646 375h152v8h-152zM950 375h168v8h-168zM646 383h152v8h-152zM950 383h168v8h-168zM646 391h152v8h-152zM950 391h168v8h-168zM646 399h152v8h-152zM950 399h168v8h-168zM646 407h152v8h-152zM950 407h168v8h-168zM646 415h152v8h-152zM950 415h168v8h-168zM646 423h152v8h-152zM950 423h168v8h-168zM646 431h152v8h-152zM950 431h168v8h-168z"/>
<path fill="#000" fill-opacity="0.35" d="M942 287h8v8h-8zM942 303h8v8h-8zM862 311h8v8h-8zM934 311h8v8h-8zM926 367h8v8h-8zM846 375h16v8h-16zM910 431h8v8h-8zM958 439h8v8h-8zM958 447h8v8h-8zM958 455h8v8h-8zM958 463h8v8h-8zM958 471h8v8h-8zM958 479h8v8h-8zM958 487h8v8h-8zM958 495h8v8h-8zM958 503h8v8h-8zM958 511h8v8h-8zM958 519h8v8h-8zM958 527h8v8h-8zM958 535h8v8h-8zM958 543h8v8h-8zM958 551h8v8h-8zM958 559h8v8h-8zM798 567h8v8h-8zM958 567h8v8h-8zM798 575h8v8h-8zM958 575h8v8h-8zM798 583h8v8h-8zM958 583h8v8h-8zM798 591h8v8h-8zM958 591h8v8h-8zM798 599h8v8h-8zM958 599h8v8h-8zM798 607h8v8h-8zM958 607h8v8h-8zM798 615h8v8h-8zM958 615h8v8h-8zM798 623h80v8h-80zM958 623h8v8h-8z"/>
<path fill="#000" fill-opacity="0.40" d="M798 255h8v8h-8zM966 255h8v8h-8zM798 263h8v8h-8zM798 271h8v8h-8zM950 271h8v8h-8zM966 271h8v8h-8zM798 279h8v8h-8zM846 279h16v8h-16zM798 287h8v8h-8zM862 287h8v8h-8zM798 295h8v8h-8zM942 295h8v8h-8zM798 303h8v8h-8zM798 311h8v8h-8zM798 319h8v8h-8zM862 319h8v8h-8zM798 327h8v8h-8zM798 335h8v8h-8zM798 343h8v8h-8zM798 351h8v8h-8zM798 359h8v8h-8zM798 367h8v8h-8zM798 375h8v8h-8zM798 383h8v8h-8zM798 391h8v8h-8zM798 399h8v8h-8zM798 407h8v8h-8zM798 415h8v8h-8zM798 423h8v8h-8zM798 431h8v8h-8zM798 439h40v8h-40zM950 439h8v8h-8zM798 447h40v8h-40zM870 447h8v8h-8zM798 455h40v8h-40zM870 455h8v8h-8zM798 463h40v8h-40zM870 463h8v8h-8zM798 471h40v8h-40zM870 471h8v8h-8zM798 479h80v8h-80zM798 487h80v8h-80zM798 495h80v8h-80zM798 503h80v8h-80zM798 511h80v8h-80zM798 519h80v8h-80zM798 527h80v8h-80zM798 535h80v8h-80zM798 543h80v8h-80zM798 551h80v8h-80zM798 559h80v8h-80zM806 567h72v8h-72zM806 575h72v8h-72zM806 583h72v8h-72zM806 591h72v8h-72zM806 599h72v8h-72zM806 607h72v8h-72zM806 615h72v8h-72zM878 623h80v8h-80z"/>
<path fill="#000" fill-opacity="0.45" d="M806 255h64v8h-64zM806 263h56v8h-56zM966 263h8v8h-8zM806 271h56v8h-56zM910 271h8v8h-8zM958 271h8v8h-8zM806 279h40v8h-40zM806 287h40v8h-40zM806 295h40v8h-40zM806 303h40v8h-40zM806 311h40v8h-40zM806 319h40v8h-40zM934 319h8v8h-8zM806 327h40v8h-40zM806 335h40v8h-40zM806 343h40v8h-40zM806 351h40v8h-40zM806 359h40v8h-40zM934 359h8v8h-8zM806 367h40v8h-40zM806 375h40v8h-40zM806 383h32v8h-32zM806 391h32v8h-32zM806 399h32v8h-32zM806 407h32v8h-32zM806 415h32v8h-32zM862 415h8v8h-8zM806 423h32v8h-32zM862 423h8v8h-8zM806 431h32v8h-32zM862 431h8v8h-8zM862 439h16v8h-16zM918 439h32v8h-32zM862 447h8v8h-8zM878 447h80v8h-80zM862 455h8v8h-8zM878 455h80v8h-80zM862 463h8v8h-8zM878 463h80v8h-80zM862 471h8v8h-8zM878 471h80v8h-80zM878 479h80v8h-80zM878 487h80v8h-80zM878 495h80v8h-80zM878 503h80v8h-80zM878 511h80v8h-80zM878 519h80v8h-80zM878 527h80v8h-80zM878 535h80v8h-80zM878 543h80v8h-80zM878 551h80v8h-80zM878 559h80v8h-80zM878 567h80v8h-80zM878 575h80v8h-80zM878 583h80v8h-80zM878 591h80v8h-80zM878 599h80v8h-80zM878 607h80v8h-80zM878 615h80v8h-80z"/>
<path fill="#000" fill-opacity="0.50" d="M950 255h16v8h-16zM902 263h8v8h-8zM950 263h8v8h-8zM934 303h8v8h-8zM862 327h8v8h-8zM902 375h8v8h-8zM838 383h24v8h-24zM838 391h24v8h-24zM838 399h24v8h-24zM838 407h32v8h-32zM838 415h24v8h-24zM838 423h24v8h-24zM838 431h24v8h-24zM870 431h8v8h-8zM838 439h24v8h-24zM910 439h8v8h-8zM838 447h24v8h-24zM838 455h24v8h-24zM838 463h24v8h-24zM838 471h24v8h-24z"/>
<path fill="#000" fill-opacity="0.55" d="M870 255h32v8h-32zM958 263h8v8h-8zM918 271h24v8h-24zM862 279h8v8h-8zM918 279h24v8h-24zM918 287h24v8h-24zM926 295h16v8h-16zM934 327h8v8h-8zM862 335h8v8h-8zM934 351h8v8h-8zM862 367h8v8h-8zM918 367h8v8h-8zM862 375h8v8h-8zM862 383h8v8h-8zM902 383h8v8h-8zM862 391h8v8h-8zM902 391h8v8h-8zM862 399h8v8h-8zM870 423h8v8h-8z"/>
<path fill="#000" fill-opacity="0.60" d="M862 263h8v8h-8zM862 271h8v8h-8zM910 279h8v8h-8zM870 295h8v8h-8zM918 295h8v8h-8zM870 303h8v8h-8zM918 303h16v8h-16zM862 343h8v8h-8zM934 343h8v8h-8zM862 359h8v8h-8zM926 359h8v8h-8zM910 367h8v8h-8zM902 399h8v8h-8zM870 415h8v8h-8z"/>
<path fill="#000" fill-opacity="0.65" d="M870 263h32v8h-32zM870 271h40v8h-40zM870 279h40v8h-40zM870 287h48v8h-48zM878 295h40v8h-40zM878 303h40v8h-40zM870 311h64v8h-64zM870 319h64v8h-64zM870 327h64v8h-64zM870 335h72v8h-72zM870 343h64v8h-64zM862 351h72v8h-72zM870 359h56v8h-56zM870 367h40v8h-40zM870 375h32v8h-32zM870 383h32v8h-32zM870 391h32v8h-32zM870 399h32v8h-32zM870 407h40v8h-40zM878 415h32v8h-32zM878 423h32v8h-32zM878 431h32v8h-32zM878 439h32v8h-32z"/>
</g>
<g filter="url(#ftan2)">
<path fill="#000" fill-opacity="0.05" d="M1110 439h8v8h-8z"/>
<path fill="#000" fill-opacity="0.20" d="M1110 255h8v8h-8zM1110 263h8v8h-8zM1110 271h8v8h-8zM1110 279h8v8h-8zM1110 287h8v8h-8zM1110 295h8v8h-8zM1110 303h8v8h-8zM1110 311h8v8h-8zM1110 319h8v8h-8zM1110 327h8v8h-8zM1110 335h8v8h-8zM1110 343h8v8h-8zM1110 351h8v8h-8zM1110 359h8v8h-8zM1110 367h8v8h-8zM1110 375h8v8h-8zM1110 383h8v8h-8zM1110 391h8v8h-8zM1110 399h8v8h-8zM1110 407h8v8h-8zM1110 415h8v8h-8zM1110 423h8v8h-8zM1110 431h8v8h-8zM918 439h192v8h-192zM958 599h8v8h-8z"/>
<path fill="#000" fill-opacity="0.25" d="M862 255h8v8h-8zM862 375h8v8h-8zM870 423h8v8h-8zM902 535h8v8h-8zM958 535h8v8h-8zM902 599h56v8h-56z"/>
<path fill="#000" fill-opacity="0.30" d="M870 255h16v8h-16zM902 255h64v8h-64zM998 255h112v8h-112zM910 263h48v8h-48zM1006 263h104v8h-104zM910 271h48v8h-48zM1006 271h104v8h-104zM918 279h40v8h-40zM1006 279h104v8h-104zM918 287h24v8h-24zM1006 287h104v8h-104zM926 295h16v8h-16zM982 295h128v8h-128zM926 303h16v8h-16zM982 303h128v8h-128zM934 311h8v8h-8zM982 311h128v8h-128zM934 319h176v8h-176zM942 327h168v8h-168zM942 335h168v8h-168zM942 343h168v8h-168zM934 351h176v8h-176zM934 359h176v8h-176zM862 367h8v8h-8zM926 367h184v8h-184zM926 375h184v8h-184zM926 383h184v8h-184zM926 391h184v8h-184zM918 399h192v8h-192zM918 407h192v8h-192zM870 415h8v8h-8zM918 415h192v8h-192zM918 423h192v8h-192zM918 431h192v8h-192zM910 439h8v8h-8zM910 535h48v8h-48zM902 543h8v8h-8zM958 543h8v8h-8zM902 551h8v8h-8zM958 551h8v8h-8zM902 559h8v8h-8zM958 559h8v8h-8zM902 567h8v8h-8zM958 567h8v8h-8zM902 575h8v8h-8zM958 575h8v8h-8zM902 583h8v8h-8zM958 583h8v8h-8zM902 591h8v8h-8zM958 591h8v8h-8z"/>
<path fill="#000" fill-opacity="0.35" d="M886 255h16v8h-16zM966 255h32v8h-32zM862 263h8v8h-8zM902 263h8v8h-8zM958 263h8v8h-8zM862 271h8v8h-8zM958 271h8v8h-8zM862 279h8v8h-8zM910 279h8v8h-8zM958 279h8v8h-8zM862 287h8v8h-8zM998 287h8v8h-8zM862 295h8v8h-8zM918 295h8v8h-8zM862 303h8v8h-8zM862 311h8v8h-8zM926 311h8v8h-8zM862 319h8v8h-8zM862 327h8v8h-8zM934 327h8v8h-8zM862 335h8v8h-8zM862 343h8v8h-8zM934 343h8v8h-8zM862 351h8v8h-8zM862 359h8v8h-8zM926 359h8v8h-8zM918 383h8v8h-8zM918 391h8v8h-8zM870 399h8v8h-8zM870 407h8v8h-8zM910 431h8v8h-8zM910 543h48v8h-48zM910 551h48v8h-48zM910 559h48v8h-48zM910 567h48v8h-48zM910 575h48v8h-48zM910 583h48v8h-48zM910 591h48v8h-48z"/>
<path fill="#000" fill-opacity="0.40" d="M870 263h32v8h-32zM998 263h8v8h-8zM870 271h40v8h-40zM998 271h8v8h-8zM870 279h40v8h-40zM998 279h8v8h-8zM870 287h48v8h-48zM982 287h16v8h-16zM870 295h48v8h-48zM870 303h56v8h-56zM870 311h56v8h-56zM870 319h64v8h-64zM870 327h64v8h-64zM870 335h72v8h-72zM870 343h64v8h-64zM870 351h64v8h-64zM870 359h56v8h-56zM870 367h56v8h-56zM870 375h56v8h-56zM870 383h48v8h-48zM870 391h48v8h-48zM878 399h40v8h-40zM878 407h40v8h-40zM878 415h40v8h-40zM878 423h40v8h-40zM878 431h32v8h-32zM878 439h32v8h-32z"/>
<path fill="#000" fill-opacity="0.45" d="M966 263h32v8h-32zM966 271h32v8h-32zM966 279h32v8h-32zM942 287h24v8h-24zM942 311h40v8h-40z"/>
<path fill="#000" fill-opacity="0.50" d="M966 287h16v8h-16zM974 295h8v8h-8zM942 303h8v8h-8z"/>
<path fill="#000" fill-opacity="0.55" d="M942 295h32v8h-32zM950 303h32v8h-32z"/>
</g>
<g filter="url(#fhill)">
<path fill="#000" fill-opacity="0.05" d="M846 263h8v8h-8zM158 463h8v8h-8zM198 535h8v8h-8z"/>
<path fill="#000" fill-opacity="0.10" d="M798 263h8v8h-8zM646 399h8v8h-8zM694 407h8v8h-8zM694 415h8v8h-8zM694 423h8v8h-8zM694 431h8v8h-8zM694 439h8v8h-8zM142 463h16v8h-16zM638 479h64v8h-64zM158 527h8v8h-8zM198 543h8v8h-8zM198 551h8v8h-8zM198 559h8v8h-8zM198 567h8v8h-8zM198 575h8v8h-8zM198 583h8v8h-8z"/>
<path fill="#000" fill-opacity="0.15" d="M806 263h40v8h-40zM846 271h8v8h-8zM846 279h8v8h-8zM846 287h8v8h-8zM846 295h8v8h-8zM846 303h8v8h-8zM846 311h8v8h-8zM846 319h8v8h-8zM846 327h8v8h-8zM846 335h8v8h-8zM646 351h8v8h-8zM654 399h40v8h-40zM910 463h8v8h-8zM158 471h8v8h-8zM158 479h8v8h-8zM158 487h8v8h-8zM158 495h8v8h-8zM158 503h8v8h-8zM158 511h8v8h-8zM158 519h8v8h-8zM142 527h16v8h-16zM358 607h8v8h-8zM774 623h8v8h-8zM870 623h8v8h-8z"/>
<path fill="#000" fill-opacity="0.20" d="M854 343h8v8h-8zM726 351h8v8h-8zM694 399h8v8h-8zM862 463h48v8h-48zM758 535h8v8h-8zM774 543h8v8h-8zM774 551h8v8h-8zM358 559h8v8h-8zM774 559h8v8h-8zM358 567h8v8h-8zM774 567h8v8h-8zM358 575h8v8h-8zM774 575h8v8h-8zM870 575h8v8h-8zM358 583h8v8h-8zM774 583h8v8h-8zM870 583h8v8h-8zM358 591h8v8h-8zM774 591h8v8h-8zM870 591h8v8h-8zM358 599h8v8h-8zM774 599h8v8h-8zM870 599h8v8h-8zM774 607h8v8h-8zM870 607h8v8h-8zM774 615h8v8h-8zM870 615h8v8h-8z"/>
<path fill="#000" fill-opacity="0.25" d="M758 447h8v8h-8zM758 455h8v8h-8zM758 463h8v8h-8zM758 471h8v8h-8zM758 479h8v8h-8zM758 487h8v8h-8zM758 495h8v8h-8zM758 503h8v8h-8zM758 511h8v8h-8zM758 519h8v8h-8zM758 527h8v8h-8zM150 535h48v8h-48zM766 535h8v8h-8z"/>
<path fill="#000" fill-opacity="0.30" d="M846 343h8v8h-8zM654 351h72v8h-72zM646 359h8v8h-8zM646 367h8v8h-8zM646 375h8v8h-8zM646 383h8v8h-8zM646 391h8v8h-8zM638 447h8v8h-8zM142 471h16v8h-16zM142 479h16v8h-16zM142 487h16v8h-16zM142 495h16v8h-16zM142 503h16v8h-16zM142 511h16v8h-16zM142 519h16v8h-16zM774 535h8v8h-8zM910 567h8v8h-8z"/>
<path fill="#000" fill-opacity="0.35" d="M702 399h96v8h-96zM702 407h96v8h-96zM702 415h96v8h-96zM702 423h96v8h-96zM702 431h96v8h-96zM702 439h136v8h-136zM766 447h72v8h-72zM766 455h72v8h-72zM766 463h72v8h-72zM766 471h72v8h-72zM766 479h72v8h-72zM766 487h72v8h-72zM766 495h72v8h-72zM766 503h72v8h-72zM766 511h72v8h-72zM766 519h72v8h-72zM766 527h72v8h-72zM366 607h24v8h-24z"/>
<path fill="#000" fill-opacity="0.40" d="M798 343h8v8h-8zM646 447h56v8h-56zM638 455h8v8h-8zM638 463h8v8h-8zM638 471h8v8h-8zM878 567h32v8h-32zM150 583h48v8h-48z"/>
<path fill="#000" fill-opacity="0.45" d="M798 271h8v8h-8zM798 279h8v8h-8zM798 287h8v8h-8zM798 295h8v8h-8zM798 303h8v8h-8zM798 311h8v8h-8zM798 319h8v8h-8zM798 327h8v8h-8zM798 335h8v8h-8zM726 359h8v8h-8zM726 367h8v8h-8zM726 375h8v8h-8zM726 383h8v8h-8zM726 391h8v8h-8zM782 535h56v8h-56zM366 559h24v8h-24zM366 567h24v8h-24zM366 575h24v8h-24zM366 583h24v8h-24zM366 591h24v8h-24zM366 599h24v8h-24z"/>
<path fill="#000" fill-opacity="0.50" d="M806 343h40v8h-40zM646 455h56v8h-56zM646 463h56v8h-56zM646 471h56v8h-56zM150 543h48v8h-48zM150 551h48v8h-48zM150 559h48v8h-48zM150 567h48v8h-48zM870 567h8v8h-8zM150 575h48v8h-48z"/>
<path fill="#000" fill-opacity="0.60" d="M806 271h40v8h-40zM806 279h40v8h-40zM806 287h40v8h-40zM806 295h40v8h-40zM806 303h40v8h-40zM806 311h40v8h-40zM806 319h40v8h-40zM806 327h40v8h-40zM806 335h40v8h-40zM654 359h72v8h-72zM654 367h72v8h-72zM654 375h72v8h-72zM654 383h72v8h-72zM654 391h72v8h-72zM798 399h8v8h-8zM798 407h8v8h-8zM798 415h8v8h-8zM798 423h8v8h-8zM798 431h8v8h-8zM838 439h8v8h-8zM838 447h8v8h-8zM838 455h8v8h-8zM838 463h8v8h-8zM838 471h8v8h-8zM910 471h8v8h-8zM838 479h8v8h-8zM910 479h8v8h-8zM838 487h8v8h-8zM910 487h8v8h-8zM838 495h8v8h-8zM910 495h8v8h-8zM838 503h8v8h-8zM910 503h8v8h-8zM838 511h8v8h-8zM910 511h8v8h-8zM838 519h8v8h-8zM910 519h8v8h-8zM838 527h8v8h-8zM910 527h8v8h-8zM910 535h8v8h-8zM910 543h8v8h-8zM910 551h8v8h-8zM910 559h8v8h-8zM782 623h88v8h-88z"/>
<path fill="#000" fill-opacity="0.65" d="M798 351h8v8h-8zM798 359h8v8h-8zM798 367h8v8h-8zM798 375h8v8h-8zM798 383h8v8h-8zM798 391h8v8h-8zM838 535h8v8h-8z"/>
<path fill="#000" fill-opacity="0.80" d="M846 471h64v8h-64zM846 479h64v8h-64zM846 487h64v8h-64zM846 495h64v8h-64zM846 503h64v8h-64zM846 511h64v8h-64zM846 519h64v8h-64zM846 527h64v8h-64zM846 535h64v8h-64zM782 543h128v8h-128zM782 551h128v8h-128zM782 559h128v8h-128zM782 567h88v8h-88zM782 575h88v8h-88zM782 583h88v8h-88zM782 591h88v8h-88zM782 599h88v8h-88zM782 607h88v8h-88zM782 615h88v8h-88z"/>
<path fill="#000" fill-opacity="0.85" d="M846 463h16v8h-16z"/>
<path fill="#000" fill-opacity="0.90" d="M806 351h56v8h-56zM806 359h56v8h-56zM806 367h56v8h-56zM806 375h56v8h-56zM806 383h56v8h-56zM806 391h56v8h-56zM806 399h56v8h-56zM806 407h56v8h-56zM806 415h56v8h-56zM806 423h56v8h-56zM806 431h56v8h-56zM846 439h16v8h-16zM846 447h16v8h-16zM846 455h16v8h-16z"/>
</g>
<circle cx="792" cy="284" r="8" fill="#a3e6c7"/>
<ellipse cx="243" cy="535" rx="4" ry="2.6" fill="#8fdaf0"/>
<ellipse cx="238" cy="552" rx="2.2" ry="1.4" fill="#8fdaf0"/>
<ellipse cx="157.6" cy="491.6" rx="1.6" ry="1" fill="#8fdaf0"/>
<ellipse cx="166" cy="500" rx="1.3" ry="0.9" fill="#8fdaf0"/>
<ellipse cx="190" cy="517" rx="2.2" ry="1.3" fill="#8fdaf0"/>
<ellipse cx="200" cy="519" rx="1.3" ry="0.9" fill="#8fdaf0"/>
<ellipse cx="275" cy="570" rx="1.3" ry="1" fill="#8fdaf0"/>
<ellipse cx="290" cy="562" rx="1" ry="0.8" fill="#8fdaf0"/>
<ellipse cx="214" cy="609" rx="1" ry="0.8" fill="#8fdaf0"/>
<ellipse cx="696" cy="548" rx="3.5" ry="2" fill="#8fdaf0"/>
<ellipse cx="702" cy="553" rx="2.5" ry="1.5" fill="#8fdaf0"/>
<ellipse cx="694" cy="487" rx="1.2" ry="1.6" fill="#8fdaf0"/>
<ellipse cx="690" cy="497" rx="13" ry="11" fill="#eef0f1" opacity="0.9"/>
<ellipse cx="697" cy="470" rx="8" ry="6" fill="#eef0f1" opacity="0.9"/>
<ellipse cx="678" cy="487" rx="7" ry="5" fill="#eef0f1" opacity="0.9"/>
<ellipse cx="703" cy="507" rx="8" ry="5" fill="#eef0f1" opacity="0.9"/>
<ellipse cx="938.5" cy="473" rx="3.5" ry="4.5" fill="#eef0f1" opacity="0.9"/>
<ellipse cx="935" cy="478" rx="3" ry="3" fill="#eef0f1" opacity="0.9"/>
<polygon points="1108.0,255.0 1107.0,270.0 1106.2,280.0 1109.5,295.0 1105.2,311.0 1102.2,332.6 1100.6,345.0 1107.4,349.6 1105.0,363.5 1097.5,375.8 1085.0,391.0 1072.8,400.5 1054.0,412.8 1035.8,422.0 1017.0,429.8 994.0,434.5 981.0,443.0 964.8,454.3 958.3,462.4 951.9,478.6 948.6,494.8 956.0,500.0 960.0,506.0 958.3,537.0 953.5,559.7 945.4,585.6 938.9,611.5 935.7,627.0 1190.0,627.0 1190.0,255.0" fill="#7fd5e9"/>
<polygon points="1102.5,351 1107.6,349.8 1106.5,360 1101.5,371 1099.5,370" fill="#f4eedf"/>
<polygon points="944.5,483 947,481.5 949.5,486 953,492 958,497 956,500.5 948.6,497.5 944.5,492" fill="#7fd5e9"/>
<path d="M1164.5 281V627M1006.5 433V627M957 551.5H1190" stroke="#95dcec" stroke-width="0.6" fill="none"/>
<path d="M762.9 508.3Q757.3 518.2 750.8 532.3M762.9 508.3Q769.6 511.0 778.3 513.5M762.9 508.3Q759.3 497.7 760.4 490.6M873.4 291.9Q857.6 290.4 840.7 293.9M873.4 291.9Q869.7 282.4 865.8 269.1M873.4 291.9Q871.4 300.9 870.0 309.8M701.4 460.0Q712.5 455.9 724.0 457.1M701.4 460.0Q699.8 451.9 698.6 440.1M701.4 460.0Q710.7 466.6 717.4 474.5M396.5 476.3Q416.8 480.6 433.4 482.0M396.5 476.3Q407.5 483.1 417.5 495.3M841.7 481.6Q845.7 469.2 851.6 462.0M841.7 481.6Q838.4 501.1 829.1 515.5M841.7 481.6Q834.7 474.1 832.8 461.4M813.1 527.8Q824.8 525.4 842.1 524.1M813.1 527.8Q812.6 518.0 809.0 505.0M813.1 527.8Q824.0 522.5 829.1 515.5M813.1 527.8Q799.9 531.8 787.8 529.8M620.7 617.1Q615.2 612.3 611.2 603.0M620.7 617.1Q637.0 612.3 648.4 608.9M620.7 617.1Q614.1 620.9 605.4 622.6M740.2 276.8Q737.9 292.5 735.2 306.3M740.2 276.8Q749.2 283.0 760.0 293.1M740.2 276.8Q727.2 276.9 713.7 276.7M691.3 393.9Q697.7 405.7 701.4 420.8M691.3 393.9Q700.8 390.9 716.1 393.7M691.3 393.9Q680.0 392.6 671.0 389.3M691.3 393.9Q695.4 383.8 698.9 373.4M672.5 322.8Q667.0 332.1 657.7 344.5M672.5 322.8Q679.4 332.1 688.1 344.0M672.5 322.8Q687.0 317.7 696.4 309.8M672.5 322.8Q656.4 329.0 644.9 331.4M757.7 320.0Q753.1 328.9 749.5 334.7M757.7 320.0Q748.7 310.3 735.2 306.3M757.7 320.0Q757.1 304.1 760.0 293.1M757.7 320.0Q760.9 330.0 769.7 339.0M509.4 623.2Q516.4 606.7 520.9 595.6M509.4 623.2Q526.3 616.7 540.3 611.3M509.4 623.2Q497.3 617.5 488.4 615.1M726.1 569.3Q725.7 577.7 720.9 591.3M726.1 569.3Q718.7 564.0 711.2 561.2M726.1 569.3Q715.6 572.4 701.4 572.6M791.0 344.1Q801.1 337.6 813.3 329.9M791.0 344.1Q781.4 340.4 769.7 339.0M791.0 344.1Q796.7 350.1 804.7 360.4M909.5 581.6Q920.4 577.1 929.5 575.9M909.5 581.6Q897.5 577.9 888.0 579.5M909.5 581.6Q921.4 593.1 928.0 600.0M909.5 581.6Q923.8 570.3 933.1 557.6M909.5 581.6Q909.8 570.1 911.1 558.6M909.5 581.6Q913.8 604.1 912.5 621.3M463.4 500.5Q449.4 493.0 433.4 482.0M463.4 500.5Q474.9 499.1 488.5 498.6M463.4 500.5Q469.8 506.6 480.4 514.2M463.4 500.5Q462.0 490.7 457.6 481.2M463.4 500.5Q470.0 485.1 472.5 472.0M520.9 595.6Q531.9 605.3 540.3 611.3M520.9 595.6Q507.1 605.8 488.4 615.1M655.1 589.5Q644.8 589.7 629.0 589.3M655.1 589.5Q649.5 597.7 648.4 608.9M655.1 589.5Q668.8 591.4 686.1 591.5M802.4 414.9Q795.5 409.3 783.6 399.6M802.4 414.9Q810.6 412.3 823.7 407.1M802.4 414.9Q806.4 422.1 814.1 432.1M802.4 414.9Q802.2 401.4 799.8 386.5M929.5 575.9Q931.0 586.1 928.0 600.0M929.5 575.9Q932.9 568.1 933.1 557.6M929.5 575.9Q920.6 567.1 911.1 558.6M724.0 457.1Q731.4 448.3 734.4 441.4M724.0 457.1Q723.4 462.9 717.4 474.5M888.0 579.5Q876.2 580.1 859.2 575.1M888.0 579.5Q897.2 572.0 911.1 558.6M781.4 458.0Q773.7 458.7 766.3 462.5M781.4 458.0Q782.7 468.5 782.8 482.5M781.4 458.0Q787.5 450.0 788.7 441.3M253.8 601.0Q269.1 590.9 281.1 582.2M253.8 601.0Q265.1 613.0 275.9 626.7M253.8 601.0Q267.9 581.7 284.9 562.4M830.5 372.9Q841.1 359.6 851.8 351.3M830.5 372.9Q833.5 362.5 830.7 352.6M830.5 372.9Q841.8 379.4 849.0 381.0M830.5 372.9Q830.9 383.4 832.9 395.0M281.1 582.2Q278.9 602.8 275.9 626.7M281.1 582.2Q294.9 562.8 313.0 546.3M281.1 582.2Q296.3 603.7 306.2 624.2M281.1 582.2Q282.5 570.2 284.9 562.4M281.1 582.2Q274.9 564.1 270.8 547.4M783.7 307.1Q779.4 294.0 771.1 281.0M783.7 307.1Q794.3 301.7 803.0 294.2M783.7 307.1Q770.4 302.0 760.0 293.1M783.7 307.1Q799.1 309.8 808.9 310.8M577.5 461.8Q573.6 470.9 569.9 484.0M577.5 461.8Q588.2 449.5 595.3 441.2M577.5 461.8Q566.5 467.2 553.0 472.7M461.3 625.2Q477.3 620.4 488.4 615.1M461.3 625.2Q448.4 606.1 433.7 592.2M461.3 625.2Q450.7 620.2 445.7 611.1M701.4 420.8Q714.5 415.6 722.2 408.4M701.4 420.8Q701.6 429.9 698.6 440.1M657.7 344.5Q661.7 354.1 661.6 366.9M657.7 344.5Q649.5 347.3 638.8 356.1M657.7 344.5Q651.3 337.2 644.9 331.4M688.1 344.0Q697.5 335.5 705.4 325.0M688.1 344.0Q695.3 347.7 701.2 351.6M715.0 338.6Q718.0 325.3 721.1 318.0M715.0 338.6Q717.1 346.3 718.5 359.9M715.0 338.6Q710.4 330.5 705.4 325.0M715.0 338.6Q710.9 342.2 701.2 351.6M575.6 548.0Q588.9 557.4 598.4 564.8M575.6 548.0Q581.5 539.4 583.8 525.9M575.6 548.0Q565.1 550.2 559.3 557.2M575.6 548.0Q584.7 542.4 598.0 540.5M813.3 329.9Q822.2 343.1 830.7 352.6M813.3 329.9Q809.7 319.7 808.9 310.8M851.8 351.3Q840.5 351.4 830.7 352.6M851.8 351.3Q850.8 369.1 849.0 381.0M851.8 351.3Q869.2 347.4 889.8 341.2M851.6 462.0Q869.1 469.1 882.4 474.4M851.6 462.0Q856.2 452.6 856.6 440.2M851.6 462.0Q839.8 461.0 832.8 461.4M275.9 626.7Q291.4 622.8 306.2 624.2M928.0 600.0Q908.0 611.0 893.9 626.1M928.0 600.0Q920.2 610.2 912.5 621.3M842.6 321.0Q843.4 307.8 840.7 293.9M842.6 321.0Q835.4 307.5 823.9 298.7M842.6 321.0Q856.4 312.7 870.0 309.8M540.3 611.3Q551.1 621.1 565.4 626.4M540.3 611.3Q551.9 605.1 558.7 599.2M651.2 459.0Q658.1 450.8 670.4 447.7M651.2 459.0Q654.6 448.7 652.9 433.7M651.2 459.0Q641.5 458.0 631.1 462.7M771.1 281.0Q768.1 285.9 760.0 293.1M771.1 281.0Q785.7 277.4 794.7 272.8M662.1 487.3Q658.5 495.1 651.8 500.3M662.1 487.3Q670.9 483.0 680.9 483.7M662.1 487.3Q663.8 496.7 669.6 509.2M537.6 474.2Q535.1 480.3 528.5 487.8M537.6 474.2Q527.9 471.9 513.5 471.6M537.6 474.2Q546.9 471.3 553.0 472.7M611.2 603.0Q601.9 599.0 586.9 592.3M611.2 603.0Q620.1 599.0 629.0 589.3M611.2 603.0Q605.6 612.5 605.4 622.6M521.0 506.5Q526.8 496.2 528.5 487.8M521.0 506.5Q518.9 491.8 513.5 471.6M521.0 506.5Q514.5 522.9 509.2 536.0M521.0 506.5Q529.2 503.9 543.0 504.1M521.0 506.5Q530.2 514.8 533.4 523.3M565.4 626.4Q584.5 627.2 605.4 622.6M565.4 626.4Q561.6 613.9 558.7 599.2M864.3 395.6Q857.6 385.8 849.0 381.0M864.3 395.6Q863.2 410.4 860.7 421.6M864.3 395.6Q875.0 389.4 883.2 388.2M864.3 395.6Q875.3 383.2 890.5 368.3M674.3 622.3Q662.1 617.1 648.4 608.9M674.3 622.3Q664.4 622.1 656.7 626.6M674.3 622.3Q679.8 620.0 691.3 620.0M711.0 604.6Q715.1 596.6 720.9 591.3M711.0 604.6Q696.3 596.2 686.1 591.5M711.0 604.6Q700.9 612.6 691.3 620.0M711.0 604.6Q714.2 609.3 718.4 619.6M433.4 482.0Q424.6 486.2 417.5 495.3M433.4 482.0Q446.1 480.5 457.6 481.2M749.5 334.7Q753.6 345.4 759.0 358.5M749.5 334.7Q743.6 344.6 739.0 359.4M749.5 334.7Q762.0 339.3 769.7 339.0M586.9 592.3Q585.0 582.5 577.3 571.9M586.9 592.3Q594.1 606.7 605.4 622.6M586.9 592.3Q570.6 594.5 558.7 599.2M840.7 293.9Q853.2 278.9 865.8 269.1M840.7 293.9Q831.9 295.8 823.9 298.7M840.7 293.9Q855.2 299.3 870.0 309.8M840.7 293.9Q827.0 287.0 816.2 283.2M766.3 462.5Q775.3 473.1 782.8 482.5M766.3 462.5Q757.4 466.0 752.2 474.2M627.4 566.3Q611.7 568.3 598.4 564.8M627.4 566.3Q627.2 578.5 629.0 589.3M627.4 566.3Q625.7 552.0 620.5 539.7M851.1 589.9Q854.2 584.4 859.2 575.1M851.1 589.9Q854.6 605.2 853.7 614.8M851.1 589.9Q834.2 600.9 821.7 614.1M851.1 589.9Q848.5 579.3 840.6 572.4M313.0 546.3Q297.8 557.1 284.9 562.4M313.0 546.3Q294.7 545.6 270.8 547.4M528.5 487.8Q522.2 479.6 513.5 471.6M528.5 487.8Q536.2 494.4 543.0 504.1M349.7 601.3Q327.2 614.6 306.2 624.2M349.7 601.3Q356.5 585.4 364.6 574.2M933.1 557.6Q922.5 558.6 911.1 558.6M865.8 269.1Q868.2 290.5 870.0 309.8M763.0 381.9Q773.6 393.5 783.6 399.6M763.0 381.9Q760.8 371.5 759.0 358.5M763.0 381.9Q752.9 383.2 743.6 387.0M853.5 557.5Q857.5 568.2 859.2 575.1M853.5 557.5Q844.4 556.2 831.7 555.9M853.5 557.5Q847.0 565.8 840.6 572.4M859.2 575.1Q854.9 595.9 853.7 614.8M859.2 575.1Q851.2 575.5 840.6 572.4M456.7 551.9Q464.8 559.1 478.0 560.4M456.7 551.9Q464.2 545.0 472.1 539.4M456.7 551.9Q445.4 561.6 434.1 566.3M456.7 551.9Q447.6 551.2 436.1 549.9M456.7 551.9Q454.9 542.3 449.5 534.3M853.7 614.8Q840.1 614.7 821.7 614.1M853.7 614.8Q874.6 618.0 893.9 626.1M670.4 447.7Q686.1 444.9 698.6 440.1M670.4 447.7Q660.8 441.6 652.9 433.7M897.2 457.6Q887.1 468.9 882.4 474.4M897.2 457.6Q903.7 445.9 908.2 435.3M897.2 457.6Q895.4 451.7 890.7 440.3M750.8 532.3Q761.6 534.5 773.2 542.6M750.8 532.3Q740.3 525.8 732.7 519.3M750.8 532.3Q739.0 533.3 726.9 533.3M750.8 532.3Q754.1 546.1 756.4 560.6M716.1 393.7Q718.5 402.7 722.2 408.4M716.1 393.7Q708.1 383.5 698.9 373.4M842.1 524.1Q836.0 537.2 831.7 555.9M842.1 524.1Q833.2 519.3 829.1 515.5M720.9 591.3Q731.6 596.3 736.8 606.0M677.0 370.4Q672.0 366.5 661.6 366.9M677.0 370.4Q672.9 379.6 671.0 389.3M677.0 370.4Q686.2 371.8 698.9 373.4M651.8 500.3Q639.1 498.6 626.6 497.7M651.8 500.3Q661.9 503.7 669.6 509.2M570.1 422.3Q581.5 433.6 595.3 441.2M570.1 422.3Q572.8 416.9 580.1 407.4M570.1 422.3Q583.1 413.2 594.3 402.0M606.0 492.3Q585.9 491.0 569.9 484.0M606.0 492.3Q614.8 493.0 626.6 497.7M606.0 492.3Q616.5 477.8 631.1 462.7M478.0 560.4Q477.8 548.3 472.1 539.4M478.0 560.4Q488.3 553.4 499.7 550.2M478.0 560.4Q482.1 570.9 484.6 582.2M577.3 571.9Q585.0 569.0 598.4 564.8M577.3 571.9Q564.0 574.3 554.3 575.7M577.3 571.9Q567.7 565.8 559.3 557.2M734.4 441.4Q749.4 439.3 768.0 434.2M734.4 441.4Q744.7 437.7 751.3 439.3M773.2 542.6Q771.7 560.1 775.0 573.2M773.2 542.6Q762.9 550.5 756.4 560.6M773.2 542.6Q780.2 534.8 787.8 529.8M773.2 542.6Q781.8 552.6 786.1 562.2M842.3 427.5Q850.3 434.4 856.6 440.2M842.3 427.5Q837.2 435.7 830.8 442.9M842.3 427.5Q850.6 426.6 860.7 421.6M809.0 505.0Q802.5 504.0 794.7 499.2M809.0 505.0Q820.3 509.0 829.1 515.5M675.0 524.0Q684.5 530.0 692.7 541.1M675.0 524.0Q677.2 511.0 683.8 502.7M675.0 524.0Q670.2 529.6 667.7 539.0M675.0 524.0Q673.5 516.7 669.6 509.2M598.4 564.8Q597.7 550.5 598.0 540.5M629.0 589.3Q638.0 597.2 648.4 608.9M768.0 434.2Q760.4 437.9 751.3 439.3M768.0 434.2Q761.3 425.3 752.9 410.5M768.0 434.2Q769.4 426.7 770.2 419.3M768.0 434.2Q776.2 436.7 788.7 441.3M692.7 541.1Q701.7 548.5 711.2 561.2M692.7 541.1Q679.4 537.1 667.7 539.0M692.7 541.1Q698.0 534.7 707.7 524.5M732.7 519.3Q732.6 526.3 726.9 533.3M732.7 519.3Q720.2 523.0 707.7 524.5M625.3 412.6Q617.6 421.0 611.0 425.3M625.3 412.6Q627.8 417.3 630.6 426.9M625.3 412.6Q621.0 401.2 622.4 386.7M882.4 474.4Q885.3 456.0 890.7 440.3M783.6 399.6Q777.1 407.4 770.2 419.3M783.6 399.6Q791.5 394.5 799.8 386.5M775.0 573.2Q776.8 591.2 775.5 608.5M775.0 573.2Q763.4 564.6 756.4 560.6M775.0 573.2Q782.2 569.6 786.1 562.2M722.2 408.4Q732.1 399.6 743.6 387.0M696.4 309.8Q706.0 315.2 721.1 318.0M696.4 309.8Q701.2 320.3 705.4 325.0M696.4 309.8Q695.6 299.0 699.6 284.2M472.1 539.4Q477.7 525.6 480.4 514.2M472.1 539.4Q463.8 536.5 449.5 534.3M472.1 539.4Q485.0 546.7 499.7 550.2M509.2 536.0Q504.1 546.0 499.7 550.2M509.2 536.0Q523.0 528.1 533.4 523.3M830.7 352.6Q819.6 357.0 804.7 360.4M488.5 498.6Q483.5 507.7 480.4 514.2M488.5 498.6Q481.3 483.3 472.5 472.0M794.7 499.2Q784.3 504.6 778.3 513.5M794.7 499.2Q787.0 488.2 782.8 482.5M775.5 608.5Q755.3 605.9 736.8 606.0M775.5 608.5Q765.1 613.0 754.2 619.6M821.7 614.1Q817.7 601.1 811.3 590.7M730.3 490.2Q722.5 484.5 717.4 474.5M730.3 490.2Q723.4 493.9 710.6 495.5M730.3 490.2Q738.8 485.0 752.2 474.2M823.9 298.7Q815.1 299.0 803.0 294.2M823.9 298.7Q819.3 307.0 808.9 310.8M823.9 298.7Q817.8 293.1 816.2 283.2M549.2 529.3Q554.3 522.1 562.4 512.3M549.2 529.3Q545.6 541.9 538.1 551.4M549.2 529.3Q542.4 526.2 533.4 523.3M813.8 457.5Q822.8 448.8 830.8 442.9M813.8 457.5Q813.5 444.5 814.1 432.1M813.8 457.5Q824.1 461.7 832.8 461.4M759.0 358.5Q746.6 359.1 739.0 359.4M759.0 358.5Q763.1 351.3 769.7 339.0M569.9 484.0Q565.4 500.8 562.4 512.3M569.9 484.0Q560.4 475.4 553.0 472.7M751.3 439.3Q762.4 430.7 770.2 419.3M778.3 513.5Q784.4 521.4 787.8 529.8M803.0 294.2Q806.9 301.6 808.9 310.8M803.0 294.2Q807.0 288.9 816.2 283.2M803.0 294.2Q797.2 283.0 794.7 272.8M652.9 433.7Q640.0 428.9 630.6 426.9M739.0 359.4Q730.7 358.7 718.5 359.9M739.0 359.4Q741.8 373.6 743.6 387.0M620.5 539.7Q609.2 539.2 598.0 540.5M620.5 539.7Q632.9 536.1 643.1 537.9M583.8 525.9Q570.7 520.8 562.4 512.3M583.8 525.9Q590.7 531.0 598.0 540.5M735.2 306.3Q730.3 311.8 721.1 318.0M735.2 306.3Q744.6 302.5 760.0 293.1M735.2 306.3Q722.6 292.6 713.7 276.7M856.6 440.2Q856.4 431.8 860.7 421.6M908.2 435.3Q903.5 428.3 902.9 416.0M908.2 435.3Q898.1 438.7 890.7 440.3M823.7 407.1Q817.4 418.8 814.1 432.1M823.7 407.1Q830.7 399.0 832.9 395.0M639.6 371.5Q650.0 368.0 661.6 366.9M639.6 371.5Q632.2 377.5 622.4 386.7M639.6 371.5Q640.1 365.0 638.8 356.1M782.8 482.5Q768.6 486.4 760.4 490.6M611.0 425.3Q601.0 431.6 595.3 441.2M611.0 425.3Q621.9 423.2 630.6 426.9M611.0 425.3Q596.7 418.3 580.1 407.4M611.0 425.3Q615.2 435.3 613.5 446.2M611.0 425.3Q600.5 411.1 594.3 402.0M554.3 575.7Q555.8 588.8 558.7 599.2M554.3 575.7Q554.4 565.3 559.3 557.2M680.9 483.7Q684.6 491.0 683.8 502.7M680.9 483.7Q676.9 498.0 669.6 509.2M661.6 366.9Q664.1 381.1 671.0 389.3M661.6 366.9Q648.1 361.7 638.8 356.1M562.4 512.3Q549.7 509.1 543.0 504.1M683.8 502.7Q696.8 500.4 710.6 495.5M683.8 502.7Q677.5 503.8 669.6 509.2M902.9 416.0Q892.5 403.2 883.2 388.2M902.9 416.0Q899.0 425.7 890.7 440.3M902.9 416.0Q888.1 421.2 878.1 423.4M626.6 497.7Q629.4 479.5 631.1 462.7M736.8 606.0Q748.3 611.7 754.2 619.6M736.8 606.0Q725.4 611.5 718.4 619.6M595.3 441.2Q601.9 444.0 613.5 446.2M648.4 608.9Q653.2 618.4 656.7 626.6M849.0 381.0Q842.6 389.2 832.9 395.0M630.6 426.9Q631.8 437.2 628.8 445.5M631.1 462.7Q621.1 454.5 613.5 446.2M631.1 462.7Q630.0 455.6 628.8 445.5M830.8 442.9Q821.2 434.8 814.1 432.1M830.8 442.9Q834.2 454.9 832.8 461.4M434.1 566.3Q435.1 555.8 436.1 549.9M434.1 566.3Q433.9 579.9 433.7 592.2M434.1 566.3Q425.1 554.5 415.7 537.0M436.1 549.9Q445.8 544.7 449.5 534.3M436.1 549.9Q432.7 573.3 433.7 592.2M436.1 549.9Q426.3 542.7 415.7 537.0M656.7 626.6Q675.1 624.9 691.3 620.0M622.4 386.7Q611.1 396.0 594.3 402.0M711.2 561.2Q703.4 564.3 701.4 572.6M860.7 421.6Q867.9 419.7 878.1 423.4M752.9 410.5Q758.9 416.6 770.2 419.3M752.9 410.5Q748.3 399.5 743.6 387.0M701.4 572.6Q693.7 581.6 686.1 591.5M701.4 572.6Q691.3 566.5 678.9 565.4M893.9 626.1Q903.4 624.4 912.5 621.3M811.3 590.7Q810.9 579.3 813.1 570.2M811.3 590.7Q806.8 572.8 802.1 558.4M721.1 318.0Q715.1 321.7 705.4 325.0M721.1 318.0Q709.7 301.9 699.6 284.2M726.9 533.3Q719.3 530.0 707.7 524.5M686.1 591.5Q679.9 579.6 678.9 565.4M698.9 373.4Q701.4 364.6 701.2 351.6M449.5 534.3Q430.0 533.2 415.7 537.0M754.2 619.6Q735.9 619.4 718.4 619.6M499.7 550.2Q492.8 565.1 484.6 582.2M717.4 474.5Q715.4 486.5 710.6 495.5M889.8 341.2Q877.6 326.8 870.0 309.8M889.8 341.2Q891.4 352.7 890.5 368.3M284.9 562.4Q280.6 555.0 270.8 547.4M580.1 407.4Q588.9 406.0 594.3 402.0M543.0 504.1Q536.2 511.4 533.4 523.3M813.1 570.2Q824.1 561.6 831.7 555.9M813.1 570.2Q809.9 565.9 802.1 558.4M718.5 359.9Q707.0 357.6 701.2 351.6M713.7 276.7Q705.3 277.8 699.6 284.2M831.7 555.9Q818.2 557.6 802.1 558.4M831.7 555.9Q833.6 563.9 840.6 572.4M678.9 565.4Q665.8 558.9 654.4 552.4M883.2 388.2Q887.2 377.5 890.5 368.3M667.7 539.0Q659.6 543.3 654.4 552.4M667.7 539.0Q655.9 539.8 643.1 537.9M788.7 441.3Q799.8 436.8 814.1 432.1M559.3 557.2Q546.0 556.5 538.1 551.4M488.4 615.1Q485.0 598.5 484.6 582.2M488.4 615.1Q466.3 611.0 445.7 611.1M802.1 558.4Q796.7 562.4 786.1 562.2M417.5 495.3Q416.9 518.6 415.7 537.0M433.7 592.2Q441.1 601.2 445.7 611.1M538.1 551.4Q534.7 536.8 533.4 523.3M613.5 446.2Q622.5 444.5 628.8 445.5M691.3 620.0Q702.3 619.1 718.4 619.6M799.8 386.5Q802.3 375.9 804.7 360.4M760.4 490.6Q754.4 484.2 752.2 474.2M816.2 283.2Q808.3 280.7 794.7 272.8M457.6 481.2Q462.5 476.4 472.5 472.0M638.8 356.1Q640.5 345.8 644.9 331.4M890.7 440.3Q883.3 432.1 878.1 423.4M654.4 552.4Q645.8 543.4 643.1 537.9" fill="none" stroke="#c3cce4" stroke-width="0.55" stroke-opacity="0.75"/>
<path d="M325.0 255.0 L345.0 285.0 L352.0 297.0 L372.0 320.0 L389.3 340.3 L400.0 357.0 L415.0 372.0 L433.0 384.0 L455.0 392.0 L476.0 397.0 L500.0 398.0 L515.0 396.0 L540.0 402.0 L556.0 412.0" fill="none" stroke="#c2cde6" stroke-width="0.8" stroke-opacity="0.9" stroke-linejoin="round"/>
<path d="M389.3 340.3 L360.0 352.0 L338.6 361.6 L330.6 360.4" fill="none" stroke="#c2cde6" stroke-width="0.8" stroke-opacity="0.9" stroke-linejoin="round"/>
<path d="M325.0 255.0 L300.0 250.0" fill="none" stroke="#c2cde6" stroke-width="0.8" stroke-opacity="0.9" stroke-linejoin="round"/>
<path d="M556.0 436.0 L558.0 420.0 L565.0 401.0 L585.0 360.0 L605.0 325.0 L616.0 305.0 L628.0 280.0 L632.0 271.0 L640.0 255.0" fill="none" stroke="#c2cde6" stroke-width="0.8" stroke-opacity="0.9" stroke-linejoin="round"/>
<path d="M609.8 262.0 L632.0 271.0 L660.0 290.0 L680.0 297.0" fill="none" stroke="#c2cde6" stroke-width="0.8" stroke-opacity="0.9" stroke-linejoin="round"/>
<path d="M693.0 478.0 L697.0 460.0 L700.0 438.0 L712.0 415.0 L730.0 392.0 L740.0 371.0 L764.0 354.0 L776.0 336.0 L786.0 310.0 L790.0 302.0 L796.0 275.0 L798.0 260.0 L799.0 255.0" fill="none" stroke="#b0bcda" stroke-width="0.95" stroke-opacity="1" stroke-linejoin="round"/>
<path d="M680.0 297.0 L700.0 310.0 L718.0 327.0 L730.0 350.0 L740.0 371.0 L743.0 397.0 L748.0 420.0 L760.0 445.0 L765.0 470.0 L776.0 488.0 L790.0 510.0 L794.0 517.0 L800.0 545.0 L795.0 580.0 L793.0 594.0 L793.0 615.0 L790.0 627.0" fill="none" stroke="#b0bcda" stroke-width="0.95" stroke-opacity="1" stroke-linejoin="round"/>
<path d="M548.5 475.7 L580.0 470.0 L610.0 468.0 L639.0 464.0 L668.0 466.0 L690.0 470.0 L697.0 470.0 L730.0 472.0 L765.0 470.0 L800.0 465.0 L821.0 460.0 L850.0 452.0 L880.0 458.0 L905.0 462.0 L921.0 464.0 L940.0 482.0" fill="none" stroke="#b0bcda" stroke-width="0.95" stroke-opacity="1" stroke-linejoin="round"/>
<path d="M502.0 600.0 L480.0 580.0 L461.0 561.0 L475.0 552.0 L498.0 544.0 L519.0 536.0 L560.0 522.0 L600.0 512.0 L623.0 504.0 L655.0 498.0 L684.0 497.0" fill="none" stroke="#b0bcda" stroke-width="0.95" stroke-opacity="1" stroke-linejoin="round"/>
<path d="M520.0 585.0 L555.0 560.0 L583.0 547.0 L607.0 539.0 L640.0 520.0 L668.0 508.0 L684.0 498.0" fill="none" stroke="#b0bcda" stroke-width="0.95" stroke-opacity="1" stroke-linejoin="round"/>
<path d="M684.0 498.0 L672.0 515.0 L667.0 526.0 L660.0 545.0 L656.0 556.0 L640.0 585.0 L625.0 605.0 L612.0 610.0 L600.0 627.0" fill="none" stroke="#b0bcda" stroke-width="0.95" stroke-opacity="1" stroke-linejoin="round"/>
<path d="M690.0 500.0 L700.0 512.0 L704.0 523.0 L715.0 545.0 L725.0 565.0 L745.0 590.0 L760.0 610.0 L770.0 627.0" fill="none" stroke="#b0bcda" stroke-width="0.95" stroke-opacity="1" stroke-linejoin="round"/>
<path d="M695.0 500.0 L740.0 500.0 L780.0 505.0 L794.0 517.0 L815.0 520.0 L838.0 495.0" fill="none" stroke="#b0bcda" stroke-width="0.95" stroke-opacity="1" stroke-linejoin="round"/>
<path d="M794.0 517.0 L815.0 532.0 L840.0 545.0 L870.0 570.0 L900.0 590.0 L915.0 598.0 L925.0 627.0" fill="none" stroke="#b0bcda" stroke-width="0.95" stroke-opacity="1" stroke-linejoin="round"/>
<path d="M516.0 507.0 L510.0 525.0 L498.0 544.0 L500.0 575.0 L503.0 600.0 L505.0 627.0" fill="none" stroke="#b0bcda" stroke-width="0.95" stroke-opacity="1" stroke-linejoin="round"/>
<path d="M940.0 482.0 L945.0 456.0 L952.0 447.0 L975.0 425.0 L994.0 404.0 L1003.0 425.0 L1030.0 420.0 L1060.0 405.0 L1078.0 390.0 L1092.0 370.0 L1096.0 339.0 L1098.0 319.0 L1101.0 290.0 L1104.0 262.0" fill="none" stroke="#b0bcda" stroke-width="0.95" stroke-opacity="1" stroke-linejoin="round"/>
<path d="M934.0 310.0 L945.0 340.0 L960.0 370.0 L979.0 398.0 L994.0 404.0" fill="none" stroke="#b0bcda" stroke-width="0.95" stroke-opacity="1" stroke-linejoin="round"/>
<path d="M934.0 310.0 L925.0 285.0 L915.0 262.0" fill="none" stroke="#b0bcda" stroke-width="0.95" stroke-opacity="1" stroke-linejoin="round"/>
<path d="M142.0 275.0 L176.0 266.0 L232.0 259.0" fill="none" stroke="#c9d3e8" stroke-width="0.6" stroke-opacity="0.9" stroke-linejoin="round"/>
<path d="M165.0 330.0 L200.0 345.0 L232.0 348.0" fill="none" stroke="#c9d3e8" stroke-width="0.6" stroke-opacity="0.9" stroke-linejoin="round"/>
<path d="M142.0 400.0 L181.0 369.0 L232.0 340.0" fill="none" stroke="#c9d3e8" stroke-width="0.6" stroke-opacity="0.9" stroke-linejoin="round"/>
<path d="M165.0 414.0 L185.0 480.0 L212.0 535.0 L240.0 541.0" fill="none" stroke="#c9d3e8" stroke-width="0.6" stroke-opacity="0.9" stroke-linejoin="round"/>
<path d="M142.0 560.0 L200.0 575.0 L232.0 600.0 L270.0 627.0" fill="none" stroke="#c9d3e8" stroke-width="0.6" stroke-opacity="0.9" stroke-linejoin="round"/>
<path d="M271.0 540.0 L300.0 548.0 L347.0 540.0 L405.0 560.0 L425.0 576.0" fill="none" stroke="#c9d3e8" stroke-width="0.6" stroke-opacity="0.9" stroke-linejoin="round"/>
<path d="M367.0 486.0 L390.0 500.0 L444.0 492.0 L516.0 507.0" fill="none" stroke="#c9d3e8" stroke-width="0.6" stroke-opacity="0.9" stroke-linejoin="round"/>
<path d="M404.0 592.0 L425.0 576.0 L461.0 561.0" fill="none" stroke="#c9d3e8" stroke-width="0.6" stroke-opacity="0.9" stroke-linejoin="round"/>
<path d="M385.0 608.0 L404.0 592.0" fill="none" stroke="#c9d3e8" stroke-width="0.6" stroke-opacity="0.9" stroke-linejoin="round"/>
<path d="M300.0 627.0 L340.0 600.0 L385.0 608.0" fill="none" stroke="#c9d3e8" stroke-width="0.6" stroke-opacity="0.9" stroke-linejoin="round"/>
<path d="M451.0 359.0 L470.0 372.0 L500.0 385.0 L540.0 402.0" fill="none" stroke="#c9d3e8" stroke-width="0.6" stroke-opacity="0.9" stroke-linejoin="round"/>
<path d="M433.0 384.0 L420.0 420.0 L394.0 449.0" fill="none" stroke="#c9d3e8" stroke-width="0.6" stroke-opacity="0.9" stroke-linejoin="round"/>
<path d="M598.0 301.0 L616.0 305.0" fill="none" stroke="#c9d3e8" stroke-width="0.6" stroke-opacity="0.9" stroke-linejoin="round"/>
<path d="M667.0 339.0 L700.0 345.0 L740.0 371.0" fill="none" stroke="#c9d3e8" stroke-width="0.6" stroke-opacity="0.9" stroke-linejoin="round"/>
<path d="M667.0 339.0 L650.0 380.0 L639.0 464.0" fill="none" stroke="#c9d3e8" stroke-width="0.6" stroke-opacity="0.9" stroke-linejoin="round"/>
<path d="M764.0 354.0 L800.0 340.0 L835.0 318.0 L868.0 318.0" fill="none" stroke="#c9d3e8" stroke-width="0.6" stroke-opacity="0.9" stroke-linejoin="round"/>
<path d="M790.0 302.0 L823.0 296.0 L850.0 290.0" fill="none" stroke="#c9d3e8" stroke-width="0.6" stroke-opacity="0.9" stroke-linejoin="round"/>
<path d="M764.0 354.0 L800.0 380.0 L830.0 420.0 L850.0 452.0" fill="none" stroke="#c9d3e8" stroke-width="0.6" stroke-opacity="0.9" stroke-linejoin="round"/>
<path d="M850.0 452.0 L860.0 420.0 L866.0 380.0" fill="none" stroke="#c9d3e8" stroke-width="0.6" stroke-opacity="0.9" stroke-linejoin="round"/>
<path d="M548.0 476.0 L560.0 500.0 L583.0 547.0" fill="none" stroke="#c9d3e8" stroke-width="0.6" stroke-opacity="0.9" stroke-linejoin="round"/>
<path d="M607.0 539.0 L612.0 610.0" fill="none" stroke="#c9d3e8" stroke-width="0.6" stroke-opacity="0.9" stroke-linejoin="round"/>
<path d="M639.0 464.0 L650.0 487.0 L680.0 491.0" fill="none" stroke="#c9d3e8" stroke-width="0.6" stroke-opacity="0.9" stroke-linejoin="round"/>
<path d="M725.0 565.0 L760.0 560.0 L794.0 593.0" fill="none" stroke="#c9d3e8" stroke-width="0.6" stroke-opacity="0.9" stroke-linejoin="round"/>
<path d="M656.0 556.0 L700.0 560.0 L725.0 565.0" fill="none" stroke="#c9d3e8" stroke-width="0.6" stroke-opacity="0.9" stroke-linejoin="round"/>
<path d="M765.0 470.0 L790.0 500.0 L794.0 517.0" fill="none" stroke="#c9d3e8" stroke-width="0.6" stroke-opacity="0.9" stroke-linejoin="round"/>
<path d="M850.0 452.0 L854.0 470.0 L870.0 500.0" fill="none" stroke="#c9d3e8" stroke-width="0.6" stroke-opacity="0.9" stroke-linejoin="round"/>
<path d="M1041.0 304.0 L1070.0 330.0 L1096.0 339.0" fill="none" stroke="#c9d3e8" stroke-width="0.6" stroke-opacity="0.9" stroke-linejoin="round"/>
<path d="M1041.0 304.0 L1000.0 290.0 L953.0 285.0" fill="none" stroke="#c9d3e8" stroke-width="0.6" stroke-opacity="0.9" stroke-linejoin="round"/>
<path d="M296.0 318.2 L527.5 318.2" fill="none" stroke="#9a9a9a" stroke-width="0.7" stroke-dasharray="1.2 1.4"/>
<path d="M404.0 318.0 L404.0 326.0 L399.0 326.0 L399.0 332.0 L404.0 334.0 L405.0 410.0 L470.0 413.0 L472.0 470.0" fill="none" stroke="#9a9a9a" stroke-width="0.7" stroke-dasharray="1.2 1.4"/>
<path d="M405.0 410.0 L400.0 445.0" fill="none" stroke="#9a9a9a" stroke-width="0.7" stroke-dasharray="1.2 1.4"/>
<path d="M508.4 255.0 L538.5 296.1 L556.6 318.2 L570.6 334.3 L610.7 357.3 L628.8 338.3" fill="none" stroke="#9a9a9a" stroke-width="0.7" stroke-dasharray="1.2 1.4"/>
<path d="M527.5 318.2 L538.5 296.1" fill="none" stroke="#9a9a9a" stroke-width="0.7" stroke-dasharray="1.2 1.4"/>
<path d="M570.6 334.3 L570.6 380.0 L566.0 400.0" fill="none" stroke="#9a9a9a" stroke-width="0.7" stroke-dasharray="1.2 1.4"/>
<path d="M404.0 360.0 L440.0 372.0 L470.0 385.0 L500.0 392.0" fill="none" stroke="#9a9a9a" stroke-width="0.7" stroke-dasharray="1.2 1.4"/>
<path d="M142.0 290.0 L190.0 300.0 L192.0 352.0 L232.0 352.0" fill="none" stroke="#9a9a9a" stroke-width="0.7" stroke-dasharray="1.2 1.4"/>
<path d="M142.0 452.0 L195.0 458.0 L232.0 470.0" fill="none" stroke="#9a9a9a" stroke-width="0.7" stroke-dasharray="1.2 1.4"/>
<path d="M405.0 470.0 L402.0 500.0 L420.0 520.0 L415.0 560.0 L440.0 600.0 L470.0 600.0 L505.0 590.0" fill="none" stroke="#9a9a9a" stroke-width="0.7" stroke-dasharray="1.2 1.4"/>
<path d="M560.0 500.0 L600.0 520.0 L640.0 540.0 L660.0 560.0" fill="none" stroke="#9a9a9a" stroke-width="0.7" stroke-dasharray="1.2 1.4"/>
<path d="M700.0 440.0 L705.0 470.0 L730.0 480.0" fill="none" stroke="#9a9a9a" stroke-width="0.7" stroke-dasharray="1.2 1.4"/>
<path d="M640.0 420.0 L680.0 430.0 L705.0 440.0 L760.0 430.0 L800.0 440.0" fill="none" stroke="#9a9a9a" stroke-width="0.7" stroke-dasharray="1.2 1.4"/>
<path d="M700.0 520.0 L740.0 540.0 L790.0 545.0" fill="none" stroke="#9a9a9a" stroke-width="0.7" stroke-dasharray="1.2 1.4"/>
<path d="M790.0 545.0 L800.0 590.0 L840.0 600.0" fill="none" stroke="#9a9a9a" stroke-width="0.7" stroke-dasharray="1.2 1.4"/>
<path d="M983.0 255.0 L1000.0 300.0 L1015.0 340.0 L1020.0 392.0 L1060.0 385.0 L1078.0 390.0" fill="none" stroke="#9a9a9a" stroke-width="0.7" stroke-dasharray="1.2 1.4"/>
<path d="M940.0 330.0 L950.0 380.0 L960.0 420.0 L965.0 450.0" fill="none" stroke="#9a9a9a" stroke-width="0.7" stroke-dasharray="1.2 1.4"/>
<path d="M231.6 255.0 L231.6 627.0" fill="none" stroke="#858585" stroke-width="1.3" stroke-linejoin="round"/>
<path d="M254.8 430.0 L256.2 431.8 L256.9 434.0 L258.1 436.0 L259.9 437.8 L261.9 439.5 L264.2 440.8 L266.0 442.7 L266.2 445.5 L268.4 447.1 L269.5 449.3 L269.3 452.2 L270.7 454.7 L270.8 457.5 L272.0 460.0 L272.8 462.1 L274.5 463.8 L274.8 466.1 L275.5 468.3 L277.0 470.0 L276.9 472.3 L277.4 474.6 L278.6 476.8 L277.8 479.2 L278.4 481.5 L279.2 483.7 L279.9 485.9 L279.3 488.3 L279.0 490.9 L278.2 493.4 L277.8 496.0 L276.2 498.1 L274.4 500.1 L273.6 502.8 L271.8 504.9 L271.0 507.4 L269.3 509.4 L268.3 511.7 L268.0 514.4 L268.4 517.0 L268.4 519.6 L267.2 522.3 L268.0 525.0 L268.1 527.4 L268.9 529.8 L268.8 532.2 L269.3 534.6 L269.5 537.0 L271.5 537.7 L273.6 538.3 L275.6 539.4 L277.8 539.7 L279.9 540.3 L282.4 540.4 L284.7 540.4 L287.0 539.7 L289.3 538.8 L291.7 539.7 L294.0 539.7 L296.3 539.4 L298.6 538.6 L300.8 539.2 L303.1 538.6 L305.2 539.8 L307.5 539.7 L309.8 539.4 L312.0 539.7 L314.3 540.4 L316.6 540.4 L318.7 538.7 L321.0 539.7 L323.2 538.9 L325.4 538.2 L327.7 538.5 L329.7 537.4 L331.6 536.0 L332.8 533.8 L333.6 531.8 L333.1 529.3 L334.3 527.2 L336.0 525.7 L338.4 525.1 L340.5 523.9 L342.0 522.0 L344.5 521.6 L346.1 519.5 L348.0 518.0 L350.4 517.6 L351.5 515.1 L353.3 513.4 L355.2 511.8 L357.1 510.0 L358.8 507.8 L360.8 505.8 L363.6 504.8 L365.4 502.7 L368.1 501.9 L370.2 500.2 L372.0 497.9 L373.9 496.7 L375.8 495.6 L377.8 494.6 L379.6 493.3 L380.8 491.0 L381.9 488.8 L383.5 486.8 L383.9 484.2 L385.0 482.0 L386.1 479.9 L386.0 477.5 L386.8 475.4 L388.6 473.5 L388.6 471.1 L389.3 468.9 L388.9 466.6 L389.8 464.5 L390.4 462.4 L389.9 460.1 L391.1 458.0 L392.0 455.9 L391.9 453.5 L393.6 451.6 L394.2 449.4 L395.7 447.4 L396.5 445.0 L398.1 443.1 L400.3 442.5 L402.2 441.0 L404.8 440.3 L407.4 441.1 L410.0 441.3 L412.4 439.9 L415.0 440.0 L417.3 440.4 L419.7 440.2 L422.0 440.6 L424.3 440.7 L426.6 441.2 L429.0 443.0 L431.7 444.2 L434.0 445.9 L435.5 447.6 L438.0 447.9 L439.3 449.9 L441.1 451.2 L443.6 452.5 L446.0 454.0 L447.9 456.2 L450.3 457.3 L452.4 458.8 L454.1 460.8 L456.6 461.8 L459.5 461.7 L462.0 462.9 L464.8 463.1 L467.5 464.2 L470.4 464.0 L472.3 465.5 L474.9 465.5 L477.0 466.8 L479.0 468.1 L481.3 469.4 L484.1 469.6 L486.7 470.3 L489.5 470.4 L492.2 471.5 L495.0 471.8 L497.6 472.5 L500.2 472.6 L502.8 471.9 L505.1 470.7 L507.8 470.5 L510.0 469.1 L513.0 468.6 L515.7 467.2 L518.3 467.5 L520.7 468.4 L522.9 469.7 L525.4 469.5 L527.7 469.9 L530.0 470.4 L533.1 469.6 L536.2 468.8 L538.9 467.8 L540.4 465.2 L542.8 463.7 L545.0 462.9 L546.5 461.2 L547.8 459.4 L548.5 456.4 L550.2 454.0 L550.8 451.1 L550.7 448.2 L552.1 445.8 L552.6 443.0 L553.0 440.0 L553.0 437.0 L553.5 434.5 L554.4 432.1 L555.0 429.7 L555.5 427.2 L557.1 425.0 L557.7 422.8 L559.5 421.2 L559.5 418.6 L561.7 417.2 L562.4 415.0 L563.4 412.9 L564.1 410.4 L564.5 408.0 L564.3 405.4 L563.7 402.9 L565.0 400.5 L567.3 400.0 L569.9 400.2 L572.4 400.8 L574.9 400.5 L577.5 400.4 L580.0 400.8 L582.3 400.6 L584.7 400.0 L587.0 399.8 L589.4 400.7 L591.7 400.0 L594.0 400.1 L594.8 397.8 L595.6 395.7 L597.0 394.0 L598.2 392.1 L598.8 389.4 L600.9 387.6 L602.0 385.1 L604.1 384.2 L606.2 382.9 L607.5 380.6 L610.0 380.1 L612.4 379.5 L614.1 377.3 L616.4 376.5 L618.7 375.7 L619.2 373.5 L619.3 371.3 L619.7 369.0 L620.5 366.8 L619.6 364.4 L620.0 362.2 L620.8 360.0 L620.7 357.7 L620.9 355.4 L622.7 353.3 L622.8 351.0 L621.8 348.6 L622.8 346.4 L622.8 344.1 L623.3 341.9 L625.2 339.9 L627.4 338.5 L629.3 336.7 L630.9 334.6 L632.9 332.9 L634.6 331.4 L636.1 329.8 L638.3 329.0 L640.2 327.9 L641.6 326.1 L643.3 324.7 L645.3 323.3 L647.6 322.4 L649.9 321.5 L652.1 320.6 L654.0 318.9 L656.4 318.1 L658.5 316.6 L660.5 315.0 L662.7 313.6 L665.0 312.5 L667.2 310.9 L668.9 308.7 L671.2 307.1 L673.0 305.0 L674.6 302.7 L676.8 301.0 L678.9 299.2 L680.3 296.8 L681.8 295.2 L683.2 293.4 L685.1 292.1 L686.2 290.2 L687.6 288.2 L689.9 287.1 L691.4 285.2 L692.7 283.1 L694.8 282.1 L696.6 280.6 L699.1 280.5 L701.1 279.3 L703.2 278.6 L705.1 277.2 L707.2 276.2 L709.3 275.3 L711.3 274.0 L713.1 272.4 L715.5 272.0 L717.4 270.6 L719.6 269.2 L722.5 268.8 L724.3 266.6 L726.9 265.8 L729.0 264.3 L731.8 264.3 L733.5 262.2 L735.9 261.3 L737.7 259.7 L738.0 256.9 L740.0 255.1" fill="none" stroke="#4d4d4d" stroke-width="1.0" stroke-linejoin="round"/>
<path d="M254.8 430.0 L253.2 427.9 L251.6 425.8 L250.0 423.8 L248.2 421.9 L246.6 420.2 L245.2 418.4 L242.8 417.6 L241.6 415.6 L240.2 413.8 L238.0 412.4 L236.0 410.6 L233.4 409.9 L231.5 408.0" fill="none" stroke="#4d4d4d" stroke-width="1.0" stroke-linejoin="round"/>
<path d="M739.8 255.0 L760.0 258.0 L790.0 256.0 L815.0 255.0" fill="none" stroke="#4d4d4d" stroke-width="1.0" stroke-linejoin="round"/>
<path d="M841.0 255.0 L855.0 258.0 L868.8 261.6 L878.0 255.0" fill="none" stroke="#4d4d4d" stroke-width="1.0" stroke-linejoin="round"/>
<path d="M868.8 261.6 L873.0 285.0 L881.1 317.2 L886.0 328.0 L890.4 338.8 L897.0 355.0 L902.7 369.6 L905.0 385.0 L905.8 400.5 L908.0 420.0 L910.4 437.5 L909.7 445.0 L906.5 456.0 L905.5 470.0 L906.5 482.3" fill="none" stroke="#4d4d4d" stroke-width="1.0" stroke-linejoin="round"/>
<path d="M906.5 482.3 L903.5 483.4 L900.4 484.3 L898.6 482.9 L896.5 482.0 L894.9 480.5 L892.9 479.3 L891.0 478.3 L889.3 476.8 L886.9 477.2 L884.5 476.9 L882.2 477.2 L879.8 477.2 L877.4 477.0 L875.0 476.9 L872.7 477.3 L870.3 477.3 L867.9 477.1 L865.6 477.0 L863.2 477.3 L860.9 477.4 L859.4 479.4 L858.8 481.8 L857.1 483.6 L856.3 486.0 L855.1 488.0 L854.2 490.2 L853.0 492.2 L851.7 494.1 L851.0 496.4 L849.8 498.4 L848.5 500.2 L847.5 502.2 L846.2 504.1 L845.1 506.1 L844.0 508.5 L842.6 510.9 L841.1 513.2 L841.0 515.6 L840.9 517.9 L840.6 520.3 L840.5 522.6 L840.4 525.0 L840.1 527.3 L840.2 529.7 L840.6 532.0 L840.4 534.4 L840.5 536.7 L843.2 537.8 L846.0 538.6 L847.6 540.2 L848.7 542.4 L850.5 543.9 L850.8 546.7 L851.0 549.4 L851.6 552.0 L853.3 553.8 L855.4 555.4 L857.0 557.5 L859.0 558.5 L861.0 559.3 L863.0 560.3 L865.2 560.8 L867.1 561.9 L869.2 562.7 L871.2 563.6 L873.3 564.4 L875.2 565.5 L877.3 566.2 L879.7 566.2 L882.0 566.5 L884.4 566.2 L886.8 566.7 L889.1 566.8 L891.5 567.2 L893.9 567.2 L896.2 566.9 L898.6 567.1 L901.0 567.5 L903.4 567.1 L905.7 567.6 L905.7 565.4 L905.8 563.2 L906.0 561.0 L906.6 558.8 L906.4 556.6 L906.6 554.4 L906.9 552.2 L907.3 550.0 L907.2 547.6 L907.8 545.3 L908.1 543.0 L908.7 540.7 L908.9 538.4 L909.1 536.0 L911.3 535.6 L913.5 535.5 L915.8 535.4 L916.1 532.9 L916.1 530.4 L915.6 528.0 L915.6 525.5 L915.7 523.0 L915.4 520.7 L915.3 518.4 L915.1 516.1 L914.6 513.9 L914.2 511.6 L914.2 509.3 L914.0 507.0 L913.9 504.8 L914.1 502.5 L913.7 500.3 L913.5 498.1 L913.4 495.9 L913.3 493.7 L912.8 491.5 L913.2 489.2 L913.0 487.0 L912.8 484.8 L910.7 483.8 L908.5 483.2 L906.5 482.3" fill="none" stroke="#4d4d4d" stroke-width="1.0" stroke-linejoin="round"/>
<path d="M915.8 535.4 L921.4 537.7 L940.0 538.0 L958.4 538.3" fill="none" stroke="#4d4d4d" stroke-width="1.0" stroke-linejoin="round"/>
<path d="M713.5 322.4H722.1Q723.1 322.4 723.1 323.4V328.2L717.8 331.6L712.5 328.2V323.4Q712.5 322.4 713.5 322.4Z" fill="#3d74d6" stroke="#fff" stroke-width="0.5"/>
<text x="717.8" y="328.7" font-size="6" font-weight="bold" fill="#fff" text-anchor="middle">11</text>
<path d="M772.1 331.4H779.1Q780.1 331.4 780.1 332.4V337.2L775.6 340.6L771.1 337.2V332.4Q771.1 331.4 772.1 331.4Z" fill="#3d74d6" stroke="#fff" stroke-width="0.5"/>
<text x="775.6" y="337.7" font-size="6" font-weight="bold" fill="#fff" text-anchor="middle">1</text>
<path d="M738.5 392.2H747.1Q748.1 392.2 748.1 393.2V398.0L742.8 401.4L737.5 398.0V393.2Q737.5 392.2 738.5 392.2Z" fill="#3d74d6" stroke="#fff" stroke-width="0.5"/>
<text x="742.8" y="398.5" font-size="6" font-weight="bold" fill="#fff" text-anchor="middle">11</text>
<path d="M696.4 433.5H703.4Q704.4 433.5 704.4 434.5V439.3L699.9 442.7L695.4 439.3V434.5Q695.4 433.5 696.4 433.5Z" fill="#3d74d6" stroke="#fff" stroke-width="0.5"/>
<text x="699.9" y="439.8" font-size="6" font-weight="bold" fill="#fff" text-anchor="middle">1</text>
<path d="M664.0 461.1H671.0Q672.0 461.1 672.0 462.1V466.9L667.5 470.3L663.0 466.9V462.1Q663.0 461.1 664.0 461.1Z" fill="#3d74d6" stroke="#fff" stroke-width="0.5"/>
<text x="667.5" y="467.4" font-size="6" font-weight="bold" fill="#fff" text-anchor="middle">4</text>
<path d="M817.3 455.2H824.3Q825.3 455.2 825.3 456.2V461.0L820.8 464.4L816.3 461.0V456.2Q816.3 455.2 817.3 455.2Z" fill="#3d74d6" stroke="#fff" stroke-width="0.5"/>
<text x="820.8" y="461.5" font-size="6" font-weight="bold" fill="#fff" text-anchor="middle">4</text>
<path d="M772.1 483.7H780.7Q781.7 483.7 781.7 484.7V489.5L776.4 492.9L771.1 489.5V484.7Q771.1 483.7 772.1 483.7Z" fill="#3d74d6" stroke="#fff" stroke-width="0.5"/>
<text x="776.4" y="490.0" font-size="6" font-weight="bold" fill="#fff" text-anchor="middle">11</text>
<path d="M834.3 490.2H842.9Q843.9 490.2 843.9 491.2V496.0L838.6 499.4L833.3 496.0V491.2Q833.3 490.2 834.3 490.2Z" fill="#3d74d6" stroke="#fff" stroke-width="0.5"/>
<text x="838.6" y="496.5" font-size="6" font-weight="bold" fill="#fff" text-anchor="middle">17</text>
<path d="M618.5 499.3H627.1Q628.1 499.3 628.1 500.3V505.1L622.8 508.5L617.5 505.1V500.3Q617.5 499.3 618.5 499.3Z" fill="#3d74d6" stroke="#fff" stroke-width="0.5"/>
<text x="622.8" y="505.6" font-size="6" font-weight="bold" fill="#fff" text-anchor="middle">14</text>
<path d="M664.0 521.0H671.0Q672.0 521.0 672.0 522.0V526.8L667.5 530.2L663.0 526.8V522.0Q663.0 521.0 664.0 521.0Z" fill="#3d74d6" stroke="#fff" stroke-width="0.5"/>
<text x="667.5" y="527.3" font-size="6" font-weight="bold" fill="#fff" text-anchor="middle">1</text>
<path d="M700.9 518.1H707.9Q708.9 518.1 708.9 519.1V523.9L704.4 527.3L699.9 523.9V519.1Q699.9 518.1 700.9 518.1Z" fill="#3d74d6" stroke="#fff" stroke-width="0.5"/>
<text x="704.4" y="524.4" font-size="6" font-weight="bold" fill="#fff" text-anchor="middle">3</text>
<path d="M811.5 527.8H818.5Q819.5 527.8 819.5 528.8V533.6L815.0 537.0L810.5 533.6V528.8Q810.5 527.8 811.5 527.8Z" fill="#3d74d6" stroke="#fff" stroke-width="0.5"/>
<text x="815.0" y="534.1" font-size="6" font-weight="bold" fill="#fff" text-anchor="middle">2</text>
<path d="M579.2 542.7H587.8Q588.8 542.7 588.8 543.7V548.5L583.5 551.9L578.2 548.5V543.7Q578.2 542.7 579.2 542.7Z" fill="#3d74d6" stroke="#fff" stroke-width="0.5"/>
<text x="583.5" y="549.0" font-size="6" font-weight="bold" fill="#fff" text-anchor="middle">12</text>
<path d="M652.3 551.2H659.3Q660.3 551.2 660.3 552.2V557.0L655.8 560.4L651.3 557.0V552.2Q651.3 551.2 652.3 551.2Z" fill="#3d74d6" stroke="#fff" stroke-width="0.5"/>
<text x="655.8" y="557.5" font-size="6" font-weight="bold" fill="#fff" text-anchor="middle">1</text>
<path d="M721.4 560.2H728.4Q729.4 560.2 729.4 561.2V566.0L724.9 569.4L720.4 566.0V561.2Q720.4 560.2 721.4 560.2Z" fill="#3d74d6" stroke="#fff" stroke-width="0.5"/>
<text x="724.9" y="566.5" font-size="6" font-weight="bold" fill="#fff" text-anchor="middle">3</text>
<path d="M789.0 610.2H797.6Q798.6 610.2 798.6 611.2V616.0L793.3 619.4L788.0 616.0V611.2Q788.0 610.2 789.0 610.2Z" fill="#3d74d6" stroke="#fff" stroke-width="0.5"/>
<text x="793.3" y="616.5" font-size="6" font-weight="bold" fill="#fff" text-anchor="middle">11</text>
<path d="M911.3 593.3H918.3Q919.3 593.3 919.3 594.3V599.1L914.8 602.5L910.3 599.1V594.3Q910.3 593.3 911.3 593.3Z" fill="#3d74d6" stroke="#fff" stroke-width="0.5"/>
<text x="914.8" y="599.6" font-size="6" font-weight="bold" fill="#fff" text-anchor="middle">2</text>
<path d="M511.4 502.9H520.0Q521.0 502.9 521.0 503.9V508.7L515.7 512.1L510.4 508.7V503.9Q510.4 502.9 511.4 502.9Z" fill="#3d74d6" stroke="#fff" stroke-width="0.5"/>
<text x="515.7" y="509.2" font-size="6" font-weight="bold" fill="#fff" text-anchor="middle">18</text>
<path d="M514.7 531.7H523.3Q524.3 531.7 524.3 532.7V537.5L519.0 540.9L513.7 537.5V532.7Q513.7 531.7 514.7 531.7Z" fill="#3d74d6" stroke="#fff" stroke-width="0.5"/>
<text x="519.0" y="538.0" font-size="6" font-weight="bold" fill="#fff" text-anchor="middle">14</text>
<path d="M457.0 556.7H465.6Q466.6 556.7 466.6 557.7V562.5L461.3 565.9L456.0 562.5V557.7Q456.0 556.7 457.0 556.7Z" fill="#3d74d6" stroke="#fff" stroke-width="0.5"/>
<text x="461.3" y="563.0" font-size="6" font-weight="bold" fill="#fff" text-anchor="middle">14</text>
<path d="M498.5 596.2H507.1Q508.1 596.2 508.1 597.2V602.0L502.8 605.4L497.5 602.0V597.2Q497.5 596.2 498.5 596.2Z" fill="#3d74d6" stroke="#fff" stroke-width="0.5"/>
<text x="502.8" y="602.5" font-size="6" font-weight="bold" fill="#fff" text-anchor="middle">18</text>
<path d="M261.7 624.4H270.3Q271.3 624.4 271.3 625.4V630.2L266.0 633.6L260.7 630.2V625.4Q260.7 624.4 261.7 624.4Z" fill="#3d74d6" stroke="#fff" stroke-width="0.5"/>
<text x="266.0" y="630.7" font-size="6" font-weight="bold" fill="#fff" text-anchor="middle">10</text>
<path d="M345.1 624.4H353.7Q354.7 624.4 354.7 625.4V630.2L349.4 633.6L344.1 630.2V625.4Q344.1 624.4 345.1 624.4Z" fill="#3d74d6" stroke="#fff" stroke-width="0.5"/>
<text x="349.4" y="630.7" font-size="6" font-weight="bold" fill="#fff" text-anchor="middle">14</text>
<rect x="345.1" y="289.4" width="10.2" height="6.8" rx="0.8" fill="#6f9a2c"/>
<text x="350.2" y="294.7" font-size="5.2" font-weight="bold" fill="#f5e04a" text-anchor="middle">A2</text>
<rect x="471.4" y="393.6" width="10.2" height="6.8" rx="0.8" fill="#6f9a2c"/>
<text x="476.5" y="398.9" font-size="5.2" font-weight="bold" fill="#f5e04a" text-anchor="middle">A2</text>
<rect x="604.1" y="319.3" width="10.2" height="6.8" rx="0.8" fill="#6f9a2c"/>
<text x="609.2" y="324.6" font-size="5.2" font-weight="bold" fill="#f5e04a" text-anchor="middle">A1</text>
<rect x="551.0" y="417.2" width="10.2" height="6.8" rx="0.8" fill="#6f9a2c"/>
<text x="556.1" y="422.5" font-size="5.2" font-weight="bold" fill="#f5e04a" text-anchor="middle">A1</text>
<rect x="925.8" y="307.0" width="16.4" height="6.8" rx="0.8" fill="#6f9a2c"/>
<text x="934.0" y="312.3" font-size="5.2" font-weight="bold" fill="#f5e04a" text-anchor="middle">N221</text>
<rect x="1091.2" y="335.4" width="10.2" height="6.8" rx="0.8" fill="#6f9a2c"/>
<text x="1096.3" y="340.7" font-size="5.2" font-weight="bold" fill="#f5e04a" text-anchor="middle">N1</text>
<rect x="970.8" y="394.6" width="16.4" height="6.8" rx="0.8" fill="#6f9a2c"/>
<text x="979.0" y="399.9" font-size="5.2" font-weight="bold" fill="#f5e04a" text-anchor="middle">N221</text>
<rect x="963.4" y="404.2" width="16.4" height="6.8" rx="0.8" fill="#6f9a2c"/>
<text x="971.6" y="409.5" font-size="5.2" font-weight="bold" fill="#f5e04a" text-anchor="middle">N101</text>
<rect x="995.2" y="407.6" width="16.4" height="6.8" rx="0.8" fill="#6f9a2c"/>
<text x="1003.4" y="412.9" font-size="5.2" font-weight="bold" fill="#f5e04a" text-anchor="middle">N102</text>
<rect x="939.9" y="452.2" width="10.2" height="6.8" rx="0.8" fill="#6f9a2c"/>
<text x="945.0" y="457.5" font-size="5.2" font-weight="bold" fill="#f5e04a" text-anchor="middle">N1</text>
<rect x="915.9" y="460.3" width="10.2" height="6.8" rx="0.8" fill="#6f9a2c"/>
<text x="921.0" y="465.6" font-size="5.2" font-weight="bold" fill="#f5e04a" text-anchor="middle">N4</text>
<rect x="894.9" y="497.3" width="13.3" height="6.8" rx="0.8" fill="#6f9a2c"/>
<text x="901.5" y="502.6" font-size="5.2" font-weight="bold" fill="#f5e04a" text-anchor="middle">MR3</text>
<rect x="919.4" y="501.5" width="16.4" height="6.8" rx="0.8" fill="#6f9a2c"/>
<text x="927.6" y="506.8" font-size="5.2" font-weight="bold" fill="#f5e04a" text-anchor="middle">N200</text>
<circle cx="174.0" cy="265.3" r="1.3" fill="#fff" stroke="#666" stroke-width="0.6"/>
<text x="176.3" y="264.9" font-size="7.4" text-anchor="start" fill="#fff" fill-opacity="0.8" stroke="#fff" stroke-width="2.0" stroke-linejoin="round" stroke-opacity="0.8">Гобабис</text>
<text x="176.3" y="264.9" font-size="7.4" text-anchor="start" fill="#6a6a6a" stroke="#6a6a6a" stroke-width="0.22">Гобабис</text>
<text x="176.3" y="272.0" font-size="7.4" text-anchor="start" fill="#fff" fill-opacity="0.8" stroke="#fff" stroke-width="2.0" stroke-linejoin="round" stroke-opacity="0.8">Gobabis</text>
<text x="176.3" y="272.0" font-size="7.4" text-anchor="start" fill="#6a6a6a" stroke="#6a6a6a" stroke-width="0.22">Gobabis</text>
<text x="148.5" y="264.7" font-size="7.4" text-anchor="start" fill="#fff" fill-opacity="0.8" stroke="#fff" stroke-width="2.0" stroke-linejoin="round" stroke-opacity="0.8">Witvlei</text>
<text x="148.5" y="264.7" font-size="7.4" text-anchor="start" fill="#484848" stroke="#484848" stroke-width="0.22">Witvlei</text>
<text x="238.0" y="261.7" font-size="7.4" text-anchor="start" fill="#fff" fill-opacity="0.8" stroke="#fff" stroke-width="2.0" stroke-linejoin="round" stroke-opacity="0.8">Charles Hill</text>
<text x="238.0" y="261.7" font-size="7.4" text-anchor="start" fill="#484848" stroke="#484848" stroke-width="0.22">Charles Hill</text>
<circle cx="164.9" cy="329.5" r="1.3" fill="#fff" stroke="#666" stroke-width="0.6"/>
<text x="166.4" y="332.7" font-size="7.4" text-anchor="start" fill="#fff" fill-opacity="0.8" stroke="#fff" stroke-width="2.0" stroke-linejoin="round" stroke-opacity="0.8">Leonardville</text>
<text x="166.4" y="332.7" font-size="7.4" text-anchor="start" fill="#484848" stroke="#484848" stroke-width="0.22">Leonardville</text>
<text x="141.7" y="359.1" font-size="7.4" text-anchor="start" fill="#fff" fill-opacity="0.8" stroke="#fff" stroke-width="2.0" stroke-linejoin="round" stroke-opacity="0.8">hanas</text>
<text x="141.7" y="359.1" font-size="7.4" text-anchor="start" fill="#484848" stroke="#484848" stroke-width="0.22">hanas</text>
<circle cx="181.5" cy="369.0" r="1.3" fill="#fff" stroke="#666" stroke-width="0.6"/>
<text x="183.4" y="371.7" font-size="7.4" text-anchor="start" fill="#fff" fill-opacity="0.8" stroke="#fff" stroke-width="2.0" stroke-linejoin="round" stroke-opacity="0.8">Aranos</text>
<text x="183.4" y="371.7" font-size="7.4" text-anchor="start" fill="#484848" stroke="#484848" stroke-width="0.22">Aranos</text>
<circle cx="142.4" cy="382.0" r="1.3" fill="#fff" stroke="#666" stroke-width="0.6"/>
<text x="143.9" y="384.7" font-size="7.4" text-anchor="start" fill="#fff" fill-opacity="0.8" stroke="#fff" stroke-width="2.0" stroke-linejoin="round" stroke-opacity="0.8">Stampriet</text>
<text x="143.9" y="384.7" font-size="7.4" text-anchor="start" fill="#484848" stroke="#484848" stroke-width="0.22">Stampriet</text>
<text x="141.7" y="397.9" font-size="7.4" text-anchor="start" fill="#fff" fill-opacity="0.8" stroke="#fff" stroke-width="2.0" stroke-linejoin="round" stroke-opacity="0.8">нталь</text>
<text x="141.7" y="397.9" font-size="7.4" text-anchor="start" fill="#484848" stroke="#484848" stroke-width="0.22">нталь</text>
<text x="141.7" y="405.4" font-size="7.4" text-anchor="start" fill="#fff" fill-opacity="0.8" stroke="#fff" stroke-width="2.0" stroke-linejoin="round" stroke-opacity="0.8">tal</text>
<text x="141.7" y="405.4" font-size="7.4" text-anchor="start" fill="#484848" stroke="#484848" stroke-width="0.22">tal</text>
<circle cx="164.6" cy="413.5" r="1.3" fill="#fff" stroke="#666" stroke-width="0.6"/>
<text x="166.4" y="416.2" font-size="7.4" text-anchor="start" fill="#fff" fill-opacity="0.8" stroke="#fff" stroke-width="2.0" stroke-linejoin="round" stroke-opacity="0.8">Gochas</text>
<text x="166.4" y="416.2" font-size="7.4" text-anchor="start" fill="#484848" stroke="#484848" stroke-width="0.22">Gochas</text>
<circle cx="389.3" cy="340.3" r="1.3" fill="#fff" stroke="#666" stroke-width="0.6"/>
<text x="391.4" y="339.6" font-size="7.4" text-anchor="start" fill="#fff" fill-opacity="0.8" stroke="#fff" stroke-width="2.0" stroke-linejoin="round" stroke-opacity="0.8">Канг</text>
<text x="391.4" y="339.6" font-size="7.4" text-anchor="start" fill="#484848" stroke="#484848" stroke-width="0.22">Канг</text>
<text x="391.4" y="347.0" font-size="7.4" text-anchor="start" fill="#fff" fill-opacity="0.8" stroke="#fff" stroke-width="2.0" stroke-linejoin="round" stroke-opacity="0.8">Kang</text>
<text x="391.4" y="347.0" font-size="7.4" text-anchor="start" fill="#484848" stroke="#484848" stroke-width="0.22">Kang</text>
<circle cx="330.6" cy="360.4" r="1.3" fill="#fff" stroke="#666" stroke-width="0.6"/>
<text x="327.5" y="359.4" font-size="7.4" text-anchor="end" fill="#fff" fill-opacity="0.8" stroke="#fff" stroke-width="2.0" stroke-linejoin="round" stroke-opacity="0.8">Хукунци</text>
<text x="327.5" y="359.4" font-size="7.4" text-anchor="end" fill="#484848" stroke="#484848" stroke-width="0.22">Хукунци</text>
<text x="327.5" y="366.7" font-size="7.4" text-anchor="end" fill="#fff" fill-opacity="0.8" stroke="#fff" stroke-width="2.0" stroke-linejoin="round" stroke-opacity="0.8">Hukuntsi</text>
<text x="327.5" y="366.7" font-size="7.4" text-anchor="end" fill="#484848" stroke="#484848" stroke-width="0.22">Hukuntsi</text>
<circle cx="338.6" cy="361.6" r="1.3" fill="#fff" stroke="#666" stroke-width="0.6"/>
<text x="340.8" y="364.3" font-size="7.4" text-anchor="start" fill="#fff" fill-opacity="0.8" stroke="#fff" stroke-width="2.0" stroke-linejoin="round" stroke-opacity="0.8">Tshane</text>
<text x="340.8" y="364.3" font-size="7.4" text-anchor="start" fill="#484848" stroke="#484848" stroke-width="0.22">Tshane</text>
<circle cx="451.3" cy="359.0" r="1.3" fill="#fff" stroke="#666" stroke-width="0.6"/>
<text x="453.1" y="362.5" font-size="7.4" text-anchor="start" fill="#fff" fill-opacity="0.8" stroke="#fff" stroke-width="2.0" stroke-linejoin="round" stroke-opacity="0.8">Dutlwe</text>
<text x="453.1" y="362.5" font-size="7.4" text-anchor="start" fill="#484848" stroke="#484848" stroke-width="0.22">Dutlwe</text>
<circle cx="433.4" cy="384.0" r="1.3" fill="#fff" stroke="#666" stroke-width="0.6"/>
<text x="435.6" y="387.1" font-size="7.4" text-anchor="start" fill="#fff" fill-opacity="0.8" stroke="#fff" stroke-width="2.0" stroke-linejoin="round" stroke-opacity="0.8">Mabutsane</text>
<text x="435.6" y="387.1" font-size="7.4" text-anchor="start" fill="#484848" stroke="#484848" stroke-width="0.22">Mabutsane</text>
<circle cx="565.0" cy="401.0" r="2.1" fill="#fff" stroke="#333" stroke-width="0.8"/><circle cx="565.0" cy="401.0" r="0.9" fill="#333"/>
<text x="562.0" y="400.6" font-size="9.9" text-anchor="end" fill="#fff" fill-opacity="0.8" stroke="#fff" stroke-width="2.0" stroke-linejoin="round" stroke-opacity="0.8">Габороне</text>
<text x="562.0" y="400.6" font-size="9.9" text-anchor="end" fill="#2e2e2e" stroke="#2e2e2e" stroke-width="0.3">Габороне</text>
<text x="562.0" y="411.6" font-size="9.9" text-anchor="end" fill="#fff" fill-opacity="0.8" stroke="#fff" stroke-width="2.0" stroke-linejoin="round" stroke-opacity="0.8">Gaborone</text>
<text x="562.0" y="411.6" font-size="9.9" text-anchor="end" fill="#2e2e2e" stroke="#2e2e2e" stroke-width="0.3">Gaborone</text>
<text x="287.0" y="434.1" font-size="8.7" text-anchor="middle" fill="#3a9a76" stroke="#3a9a76" stroke-width="0.25">Kgalagadi</text>
<text x="287.0" y="443.1" font-size="8.7" text-anchor="middle" fill="#3a9a76" stroke="#3a9a76" stroke-width="0.25">Transfrontier</text>
<text x="287.0" y="452.1" font-size="8.7" text-anchor="middle" fill="#3a9a76" stroke="#3a9a76" stroke-width="0.25">Park</text>
<circle cx="182.8" cy="480.9" r="1.3" fill="#fff" stroke="#666" stroke-width="0.6"/>
<text x="185.1" y="483.6" font-size="7.4" text-anchor="start" fill="#fff" fill-opacity="0.8" stroke="#fff" stroke-width="2.0" stroke-linejoin="round" stroke-opacity="0.8">Koes</text>
<text x="185.1" y="483.6" font-size="7.4" text-anchor="start" fill="#484848" stroke="#484848" stroke-width="0.22">Koes</text>
<text x="142.3" y="520.2" font-size="7.4" text-anchor="start" fill="#fff" fill-opacity="0.8" stroke="#fff" stroke-width="2.0" stroke-linejoin="round" stroke-opacity="0.8">мансхуп</text>
<text x="142.3" y="520.2" font-size="7.4" text-anchor="start" fill="#484848" stroke="#484848" stroke-width="0.22">мансхуп</text>
<text x="142.3" y="528.0" font-size="7.4" text-anchor="start" fill="#fff" fill-opacity="0.8" stroke="#fff" stroke-width="2.0" stroke-linejoin="round" stroke-opacity="0.8">tmanshoop</text>
<text x="142.3" y="528.0" font-size="7.4" text-anchor="start" fill="#484848" stroke="#484848" stroke-width="0.22">tmanshoop</text>
<circle cx="212.0" cy="535.3" r="1.3" fill="#fff" stroke="#666" stroke-width="0.6"/>
<text x="214.3" y="538.0" font-size="7.4" text-anchor="start" fill="#fff" fill-opacity="0.8" stroke="#fff" stroke-width="2.0" stroke-linejoin="round" stroke-opacity="0.8">Aroab</text>
<text x="214.3" y="538.0" font-size="7.4" text-anchor="start" fill="#484848" stroke="#484848" stroke-width="0.22">Aroab</text>
<circle cx="271.3" cy="540.5" r="1.3" fill="#fff" stroke="#666" stroke-width="0.6"/>
<text x="268.7" y="543.9" font-size="7.4" text-anchor="end" fill="#fff" fill-opacity="0.8" stroke="#fff" stroke-width="2.0" stroke-linejoin="round" stroke-opacity="0.8">Bokspits</text>
<text x="268.7" y="543.9" font-size="7.4" text-anchor="end" fill="#484848" stroke="#484848" stroke-width="0.22">Bokspits</text>
<circle cx="367.6" cy="485.8" r="1.3" fill="#fff" stroke="#666" stroke-width="0.6"/>
<text x="369.9" y="484.9" font-size="7.4" text-anchor="start" fill="#fff" fill-opacity="0.8" stroke="#fff" stroke-width="2.0" stroke-linejoin="round" stroke-opacity="0.8">Чабонг</text>
<text x="369.9" y="484.9" font-size="7.4" text-anchor="start" fill="#484848" stroke="#484848" stroke-width="0.22">Чабонг</text>
<text x="369.9" y="492.3" font-size="7.4" text-anchor="start" fill="#fff" fill-opacity="0.8" stroke="#fff" stroke-width="2.0" stroke-linejoin="round" stroke-opacity="0.8">Tshabong</text>
<text x="369.9" y="492.3" font-size="7.4" text-anchor="start" fill="#484848" stroke="#484848" stroke-width="0.22">Tshabong</text>
<circle cx="444.1" cy="492.2" r="1.3" fill="#fff" stroke="#666" stroke-width="0.6"/>
<text x="446.7" y="495.3" font-size="7.4" text-anchor="start" fill="#fff" fill-opacity="0.8" stroke="#fff" stroke-width="2.0" stroke-linejoin="round" stroke-opacity="0.8">Morokweng</text>
<text x="446.7" y="495.3" font-size="7.4" text-anchor="start" fill="#484848" stroke="#484848" stroke-width="0.22">Morokweng</text>
<circle cx="337.8" cy="526.3" r="1.3" fill="#fff" stroke="#666" stroke-width="0.6"/>
<text x="340.4" y="525.7" font-size="7.4" text-anchor="start" fill="#fff" fill-opacity="0.8" stroke="#fff" stroke-width="2.0" stroke-linejoin="round" stroke-opacity="0.8">Мидлпитс</text>
<text x="340.4" y="525.7" font-size="7.4" text-anchor="start" fill="#484848" stroke="#484848" stroke-width="0.22">Мидлпитс</text>
<text x="340.4" y="533.2" font-size="7.4" text-anchor="start" fill="#fff" fill-opacity="0.8" stroke="#fff" stroke-width="2.0" stroke-linejoin="round" stroke-opacity="0.8">Middlepits</text>
<text x="340.4" y="533.2" font-size="7.4" text-anchor="start" fill="#484848" stroke="#484848" stroke-width="0.22">Middlepits</text>
<circle cx="347.5" cy="540.5" r="1.3" fill="#fff" stroke="#666" stroke-width="0.6"/>
<text x="350.1" y="543.2" font-size="7.4" text-anchor="start" fill="#fff" fill-opacity="0.8" stroke="#fff" stroke-width="2.0" stroke-linejoin="round" stroke-opacity="0.8">Van Zylsrus</text>
<text x="350.1" y="543.2" font-size="7.4" text-anchor="start" fill="#484848" stroke="#484848" stroke-width="0.22">Van Zylsrus</text>
<circle cx="498.2" cy="544.4" r="1.3" fill="#fff" stroke="#666" stroke-width="0.6"/>
<text x="495.6" y="543.9" font-size="7.4" text-anchor="end" fill="#fff" fill-opacity="0.8" stroke="#fff" stroke-width="2.0" stroke-linejoin="round" stroke-opacity="0.8">Фрейбург</text>
<text x="495.6" y="543.9" font-size="7.4" text-anchor="end" fill="#484848" stroke="#484848" stroke-width="0.22">Фрейбург</text>
<text x="495.6" y="551.3" font-size="7.4" text-anchor="end" fill="#fff" fill-opacity="0.8" stroke="#fff" stroke-width="2.0" stroke-linejoin="round" stroke-opacity="0.8">Vryburg</text>
<text x="495.6" y="551.3" font-size="7.4" text-anchor="end" fill="#484848" stroke="#484848" stroke-width="0.22">Vryburg</text>
<circle cx="425.0" cy="576.5" r="1.3" fill="#fff" stroke="#666" stroke-width="0.6"/>
<text x="427.6" y="575.7" font-size="7.4" text-anchor="start" fill="#fff" fill-opacity="0.8" stroke="#fff" stroke-width="2.0" stroke-linejoin="round" stroke-opacity="0.8">Куруман</text>
<text x="427.6" y="575.7" font-size="7.4" text-anchor="start" fill="#484848" stroke="#484848" stroke-width="0.22">Куруман</text>
<text x="427.6" y="583.4" font-size="7.4" text-anchor="start" fill="#fff" fill-opacity="0.8" stroke="#fff" stroke-width="2.0" stroke-linejoin="round" stroke-opacity="0.8">Kuruman</text>
<text x="427.6" y="583.4" font-size="7.4" text-anchor="start" fill="#484848" stroke="#484848" stroke-width="0.22">Kuruman</text>
<circle cx="403.6" cy="592.1" r="1.3" fill="#fff" stroke="#666" stroke-width="0.6"/>
<text x="405.9" y="594.8" font-size="7.4" text-anchor="start" fill="#fff" fill-opacity="0.8" stroke="#fff" stroke-width="2.0" stroke-linejoin="round" stroke-opacity="0.8">Kathu</text>
<text x="405.9" y="594.8" font-size="7.4" text-anchor="start" fill="#484848" stroke="#484848" stroke-width="0.22">Kathu</text>
<circle cx="385.4" cy="608.3" r="1.3" fill="#fff" stroke="#666" stroke-width="0.6"/>
<text x="387.7" y="611.0" font-size="7.4" text-anchor="start" fill="#fff" fill-opacity="0.8" stroke="#fff" stroke-width="2.0" stroke-linejoin="round" stroke-opacity="0.8">Olifantshoek</text>
<text x="387.7" y="611.0" font-size="7.4" text-anchor="start" fill="#484848" stroke="#484848" stroke-width="0.22">Olifantshoek</text>
<text x="143.6" y="593.2" font-size="7.4" text-anchor="start" fill="#fff" fill-opacity="0.8" stroke="#fff" stroke-width="2.0" stroke-linejoin="round" stroke-opacity="0.8">Грюнау</text>
<text x="143.6" y="593.2" font-size="7.4" text-anchor="start" fill="#484848" stroke="#484848" stroke-width="0.22">Грюнау</text>
<text x="143.6" y="600.6" font-size="7.4" text-anchor="start" fill="#fff" fill-opacity="0.8" stroke="#fff" stroke-width="2.0" stroke-linejoin="round" stroke-opacity="0.8">Grunau</text>
<text x="143.6" y="600.6" font-size="7.4" text-anchor="start" fill="#484848" stroke="#484848" stroke-width="0.22">Grunau</text>
<circle cx="160.8" cy="612.2" r="1.3" fill="#fff" stroke="#666" stroke-width="0.6"/>
<text x="163.4" y="611.3" font-size="7.4" text-anchor="start" fill="#fff" fill-opacity="0.8" stroke="#fff" stroke-width="2.0" stroke-linejoin="round" stroke-opacity="0.8">Карасбург</text>
<text x="163.4" y="611.3" font-size="7.4" text-anchor="start" fill="#484848" stroke="#484848" stroke-width="0.22">Карасбург</text>
<text x="163.4" y="618.8" font-size="7.4" text-anchor="start" fill="#fff" fill-opacity="0.8" stroke="#fff" stroke-width="2.0" stroke-linejoin="round" stroke-opacity="0.8">Karasburg</text>
<text x="163.4" y="618.8" font-size="7.4" text-anchor="start" fill="#484848" stroke="#484848" stroke-width="0.22">Karasburg</text>
<circle cx="609.8" cy="262.0" r="1.3" fill="#fff" stroke="#666" stroke-width="0.6"/>
<text x="607.0" y="261.2" font-size="7.4" text-anchor="end" fill="#fff" fill-opacity="0.8" stroke="#fff" stroke-width="2.0" stroke-linejoin="round" stroke-opacity="0.8">Серове</text>
<text x="607.0" y="261.2" font-size="7.4" text-anchor="end" fill="#484848" stroke="#484848" stroke-width="0.22">Серове</text>
<text x="607.0" y="268.7" font-size="7.4" text-anchor="end" fill="#fff" fill-opacity="0.8" stroke="#fff" stroke-width="2.0" stroke-linejoin="round" stroke-opacity="0.8">Serowe</text>
<text x="607.0" y="268.7" font-size="7.4" text-anchor="end" fill="#484848" stroke="#484848" stroke-width="0.22">Serowe</text>
<circle cx="632.3" cy="271.2" r="1.3" fill="#fff" stroke="#666" stroke-width="0.6"/>
<text x="634.8" y="271.1" font-size="7.4" text-anchor="start" fill="#fff" fill-opacity="0.8" stroke="#fff" stroke-width="2.0" stroke-linejoin="round" stroke-opacity="0.8">Палапье</text>
<text x="634.8" y="271.1" font-size="7.4" text-anchor="start" fill="#484848" stroke="#484848" stroke-width="0.22">Палапье</text>
<text x="634.8" y="278.5" font-size="7.4" text-anchor="start" fill="#fff" fill-opacity="0.8" stroke="#fff" stroke-width="2.0" stroke-linejoin="round" stroke-opacity="0.8">Palapye</text>
<text x="634.8" y="278.5" font-size="7.4" text-anchor="start" fill="#484848" stroke="#484848" stroke-width="0.22">Palapye</text>
<circle cx="598.0" cy="301.0" r="1.3" fill="#fff" stroke="#666" stroke-width="0.6"/>
<text x="596.2" y="304.4" font-size="7.4" text-anchor="end" fill="#fff" fill-opacity="0.8" stroke="#fff" stroke-width="2.0" stroke-linejoin="round" stroke-opacity="0.8">Shoshong</text>
<text x="596.2" y="304.4" font-size="7.4" text-anchor="end" fill="#484848" stroke="#484848" stroke-width="0.22">Shoshong</text>
<circle cx="616.3" cy="304.8" r="1.3" fill="#fff" stroke="#666" stroke-width="0.6"/>
<text x="618.8" y="305.4" font-size="7.4" text-anchor="start" fill="#fff" fill-opacity="0.8" stroke="#fff" stroke-width="2.0" stroke-linejoin="round" stroke-opacity="0.8">Махалапье</text>
<text x="618.8" y="305.4" font-size="7.4" text-anchor="start" fill="#484848" stroke="#484848" stroke-width="0.22">Махалапье</text>
<text x="618.8" y="312.5" font-size="7.4" text-anchor="start" fill="#fff" fill-opacity="0.8" stroke="#fff" stroke-width="2.0" stroke-linejoin="round" stroke-opacity="0.8">Mahalapye</text>
<text x="618.8" y="312.5" font-size="7.4" text-anchor="start" fill="#484848" stroke="#484848" stroke-width="0.22">Mahalapye</text>
<circle cx="667.5" cy="339.4" r="1.3" fill="#fff" stroke="#666" stroke-width="0.6"/>
<text x="670.0" y="339.0" font-size="7.4" text-anchor="start" fill="#fff" fill-opacity="0.8" stroke="#fff" stroke-width="2.0" stroke-linejoin="round" stroke-opacity="0.8">Лепхалале</text>
<text x="670.0" y="339.0" font-size="7.4" text-anchor="start" fill="#484848" stroke="#484848" stroke-width="0.22">Лепхалале</text>
<text x="670.0" y="346.1" font-size="7.4" text-anchor="start" fill="#fff" fill-opacity="0.8" stroke="#fff" stroke-width="2.0" stroke-linejoin="round" stroke-opacity="0.8">Lephalale</text>
<text x="670.0" y="346.1" font-size="7.4" text-anchor="start" fill="#484848" stroke="#484848" stroke-width="0.22">Lephalale</text>
<circle cx="797.8" cy="260.0" r="1.3" fill="#fff" stroke="#666" stroke-width="0.6"/>
<text x="795.5" y="258.7" font-size="7.4" text-anchor="end" fill="#fff" fill-opacity="0.8" stroke="#fff" stroke-width="2.0" stroke-linejoin="round" stroke-opacity="0.8">Мусина</text>
<text x="795.5" y="258.7" font-size="7.4" text-anchor="end" fill="#484848" stroke="#484848" stroke-width="0.22">Мусина</text>
<text x="795.5" y="266.5" font-size="7.4" text-anchor="end" fill="#fff" fill-opacity="0.8" stroke="#fff" stroke-width="2.0" stroke-linejoin="round" stroke-opacity="0.8">Musina</text>
<text x="795.5" y="266.5" font-size="7.4" text-anchor="end" fill="#484848" stroke="#484848" stroke-width="0.22">Musina</text>
<circle cx="790.4" cy="302.0" r="1.3" fill="#fff" stroke="#666" stroke-width="0.6"/>
<text x="788.0" y="297.7" font-size="7.4" text-anchor="end" fill="#fff" fill-opacity="0.8" stroke="#fff" stroke-width="2.0" stroke-linejoin="round" stroke-opacity="0.8">Макадо</text>
<text x="788.0" y="297.7" font-size="7.4" text-anchor="end" fill="#484848" stroke="#484848" stroke-width="0.22">Макадо</text>
<text x="788.0" y="305.0" font-size="7.4" text-anchor="end" fill="#fff" fill-opacity="0.8" stroke="#fff" stroke-width="2.0" stroke-linejoin="round" stroke-opacity="0.8">Louis</text>
<text x="788.0" y="305.0" font-size="7.4" text-anchor="end" fill="#484848" stroke="#484848" stroke-width="0.22">Louis</text>
<text x="788.0" y="312.5" font-size="7.4" text-anchor="end" fill="#fff" fill-opacity="0.8" stroke="#fff" stroke-width="2.0" stroke-linejoin="round" stroke-opacity="0.8">Trichardt</text>
<text x="788.0" y="312.5" font-size="7.4" text-anchor="end" fill="#484848" stroke="#484848" stroke-width="0.22">Trichardt</text>
<circle cx="822.8" cy="295.9" r="1.3" fill="#fff" stroke="#666" stroke-width="0.6"/>
<text x="825.6" y="294.6" font-size="7.4" text-anchor="start" fill="#fff" fill-opacity="0.8" stroke="#fff" stroke-width="2.0" stroke-linejoin="round" stroke-opacity="0.8">Тохойандоу</text>
<text x="825.6" y="294.6" font-size="7.4" text-anchor="start" fill="#484848" stroke="#484848" stroke-width="0.22">Тохойандоу</text>
<text x="825.6" y="302.3" font-size="7.4" text-anchor="start" fill="#fff" fill-opacity="0.8" stroke="#fff" stroke-width="2.0" stroke-linejoin="round" stroke-opacity="0.8">Thohoyandou</text>
<text x="825.6" y="302.3" font-size="7.4" text-anchor="start" fill="#484848" stroke="#484848" stroke-width="0.22">Thohoyandou</text>
<circle cx="834.8" cy="318.0" r="1.3" fill="#fff" stroke="#666" stroke-width="0.6"/>
<text x="837.3" y="317.4" font-size="7.4" text-anchor="start" fill="#fff" fill-opacity="0.8" stroke="#fff" stroke-width="2.0" stroke-linejoin="round" stroke-opacity="0.8">Гияни</text>
<text x="837.3" y="317.4" font-size="7.4" text-anchor="start" fill="#484848" stroke="#484848" stroke-width="0.22">Гияни</text>
<text x="837.3" y="324.8" font-size="7.4" text-anchor="start" fill="#fff" fill-opacity="0.8" stroke="#fff" stroke-width="2.0" stroke-linejoin="round" stroke-opacity="0.8">Giyani</text>
<text x="837.3" y="324.8" font-size="7.4" text-anchor="start" fill="#484848" stroke="#484848" stroke-width="0.22">Giyani</text>
<circle cx="764.4" cy="353.9" r="1.3" fill="#fff" stroke="#666" stroke-width="0.6"/>
<text x="767.8" y="353.3" font-size="7.9" text-anchor="start" fill="#fff" fill-opacity="0.8" stroke="#fff" stroke-width="2.0" stroke-linejoin="round" stroke-opacity="0.8">Питерсбург</text>
<text x="767.8" y="353.3" font-size="7.9" text-anchor="start" fill="#2a2a2a" stroke="#2a2a2a" stroke-width="0.28">Питерсбург</text>
<text x="767.8" y="361.0" font-size="7.9" text-anchor="start" fill="#fff" fill-opacity="0.8" stroke="#fff" stroke-width="2.0" stroke-linejoin="round" stroke-opacity="0.8">Polokwane</text>
<text x="767.8" y="361.0" font-size="7.9" text-anchor="start" fill="#2a2a2a" stroke="#2a2a2a" stroke-width="0.28">Polokwane</text>
<circle cx="739.8" cy="370.9" r="1.3" fill="#fff" stroke="#666" stroke-width="0.6"/>
<text x="742.8" y="370.2" font-size="7.4" text-anchor="start" fill="#fff" fill-opacity="0.8" stroke="#fff" stroke-width="2.0" stroke-linejoin="round" stroke-opacity="0.8">Потгитерсрус</text>
<text x="742.8" y="370.2" font-size="7.4" text-anchor="start" fill="#484848" stroke="#484848" stroke-width="0.22">Потгитерсрус</text>
<text x="742.8" y="377.9" font-size="7.4" text-anchor="start" fill="#fff" fill-opacity="0.8" stroke="#fff" stroke-width="2.0" stroke-linejoin="round" stroke-opacity="0.8">Mokopane</text>
<text x="742.8" y="377.9" font-size="7.4" text-anchor="start" fill="#484848" stroke="#484848" stroke-width="0.22">Mokopane</text>
<text x="882.7" y="353.6" font-size="8.7" text-anchor="middle" fill="#3d9c78" stroke="#3d9c78" stroke-width="0.25">Национальный</text>
<text x="882.7" y="361.9" font-size="8.7" text-anchor="middle" fill="#3d9c78" stroke="#3d9c78" stroke-width="0.25">парк Крюгер</text>
<text x="884.0" y="369.4" font-size="6.2" text-anchor="middle" fill="#3d9c78" stroke="#3d9c78" stroke-width="0.15">Kruger</text>
<text x="884.0" y="376.4" font-size="6.2" text-anchor="middle" fill="#3d9c78" stroke="#3d9c78" stroke-width="0.15">National Park</text>
<circle cx="639.3" cy="463.7" r="1.3" fill="#fff" stroke="#666" stroke-width="0.6"/>
<text x="636.7" y="462.8" font-size="7.4" text-anchor="end" fill="#fff" fill-opacity="0.8" stroke="#fff" stroke-width="2.0" stroke-linejoin="round" stroke-opacity="0.8">Растенбург</text>
<text x="636.7" y="462.8" font-size="7.4" text-anchor="end" fill="#484848" stroke="#484848" stroke-width="0.22">Растенбург</text>
<text x="636.7" y="470.6" font-size="7.4" text-anchor="end" fill="#fff" fill-opacity="0.8" stroke="#fff" stroke-width="2.0" stroke-linejoin="round" stroke-opacity="0.8">Rustenburg</text>
<text x="636.7" y="470.6" font-size="7.4" text-anchor="end" fill="#484848" stroke="#484848" stroke-width="0.22">Rustenburg</text>
<circle cx="548.5" cy="475.7" r="1.3" fill="#fff" stroke="#666" stroke-width="0.6"/>
<text x="551.1" y="474.8" font-size="7.4" text-anchor="start" fill="#fff" fill-opacity="0.8" stroke="#fff" stroke-width="2.0" stroke-linejoin="round" stroke-opacity="0.8">Мафикенг</text>
<text x="551.1" y="474.8" font-size="7.4" text-anchor="start" fill="#484848" stroke="#484848" stroke-width="0.22">Мафикенг</text>
<text x="551.1" y="482.6" font-size="7.4" text-anchor="start" fill="#fff" fill-opacity="0.8" stroke="#fff" stroke-width="2.0" stroke-linejoin="round" stroke-opacity="0.8">Mahikeng</text>
<text x="551.1" y="482.6" font-size="7.4" text-anchor="start" fill="#484848" stroke="#484848" stroke-width="0.22">Mahikeng</text>
<circle cx="680.1" cy="490.6" r="1.3" fill="#fff" stroke="#666" stroke-width="0.6"/>
<text x="677.9" y="489.7" font-size="7.4" text-anchor="end" fill="#fff" fill-opacity="0.8" stroke="#fff" stroke-width="2.0" stroke-linejoin="round" stroke-opacity="0.8">Рандбург</text>
<text x="677.9" y="489.7" font-size="7.4" text-anchor="end" fill="#777" stroke="#777" stroke-width="0.22">Рандбург</text>
<text x="677.9" y="497.2" font-size="7.4" text-anchor="end" fill="#fff" fill-opacity="0.8" stroke="#fff" stroke-width="2.0" stroke-linejoin="round" stroke-opacity="0.8">Randburg</text>
<text x="677.9" y="497.2" font-size="7.4" text-anchor="end" fill="#777" stroke="#777" stroke-width="0.22">Randburg</text>
<circle cx="684.3" cy="497.7" r="1.3" fill="#fff" stroke="#666" stroke-width="0.6"/>
<text x="696.8" y="468.3" font-size="10" text-anchor="start" fill="#fff" fill-opacity="0.8" stroke="#fff" stroke-width="2.0" stroke-linejoin="round" stroke-opacity="0.8">Претория</text>
<text x="696.8" y="468.3" font-size="10" text-anchor="start" fill="#2e2e2e" stroke="#2e2e2e" stroke-width="0.3">Претория</text>
<text x="696.8" y="478.0" font-size="10" text-anchor="start" fill="#fff" fill-opacity="0.8" stroke="#fff" stroke-width="2.0" stroke-linejoin="round" stroke-opacity="0.8">Pretoria</text>
<text x="696.8" y="478.0" font-size="10" text-anchor="start" fill="#2e2e2e" stroke="#2e2e2e" stroke-width="0.3">Pretoria</text>
<text x="687.3" y="496.2" font-size="10" text-anchor="start" fill="#fff" fill-opacity="0.8" stroke="#fff" stroke-width="2.0" stroke-linejoin="round" stroke-opacity="0.8">Йоханнесбург</text>
<text x="687.3" y="496.2" font-size="10" text-anchor="start" fill="#2e2e2e" stroke="#2e2e2e" stroke-width="0.3">Йоханнесбург</text>
<text x="687.3" y="506.5" font-size="10" text-anchor="start" fill="#fff" fill-opacity="0.8" stroke="#fff" stroke-width="2.0" stroke-linejoin="round" stroke-opacity="0.8">Johannesburg</text>
<text x="687.3" y="506.5" font-size="10" text-anchor="start" fill="#2e2e2e" stroke="#2e2e2e" stroke-width="0.3">Johannesburg</text>
<circle cx="765.0" cy="470.2" r="1.3" fill="#fff" stroke="#666" stroke-width="0.6"/>
<text x="768.0" y="469.3" font-size="7.4" text-anchor="start" fill="#fff" fill-opacity="0.8" stroke="#fff" stroke-width="2.0" stroke-linejoin="round" stroke-opacity="0.8">Мидделбург</text>
<text x="768.0" y="469.3" font-size="7.4" text-anchor="start" fill="#484848" stroke="#484848" stroke-width="0.22">Мидделбург</text>
<text x="768.0" y="477.1" font-size="7.4" text-anchor="start" fill="#fff" fill-opacity="0.8" stroke="#fff" stroke-width="2.0" stroke-linejoin="round" stroke-opacity="0.8">Middelburg</text>
<text x="768.0" y="477.1" font-size="7.4" text-anchor="start" fill="#484848" stroke="#484848" stroke-width="0.22">Middelburg</text>
<circle cx="850.0" cy="451.7" r="1.3" fill="#fff" stroke="#666" stroke-width="0.6"/>
<text x="852.9" y="450.9" font-size="7.4" text-anchor="start" fill="#fff" fill-opacity="0.8" stroke="#fff" stroke-width="2.0" stroke-linejoin="round" stroke-opacity="0.8">Мбомбела</text>
<text x="852.9" y="450.9" font-size="7.4" text-anchor="start" fill="#484848" stroke="#484848" stroke-width="0.22">Мбомбела</text>
<text x="852.9" y="458.6" font-size="7.4" text-anchor="start" fill="#fff" fill-opacity="0.8" stroke="#fff" stroke-width="2.0" stroke-linejoin="round" stroke-opacity="0.8">Mbombela</text>
<text x="852.9" y="458.6" font-size="7.4" text-anchor="start" fill="#484848" stroke="#484848" stroke-width="0.22">Mbombela</text>
<circle cx="854.2" cy="469.5" r="1.3" fill="#fff" stroke="#666" stroke-width="0.6"/>
<text x="857.1" y="468.4" font-size="7.4" text-anchor="start" fill="#fff" fill-opacity="0.8" stroke="#fff" stroke-width="2.0" stroke-linejoin="round" stroke-opacity="0.8">Барбертон</text>
<text x="857.1" y="468.4" font-size="7.4" text-anchor="start" fill="#484848" stroke="#484848" stroke-width="0.22">Барбертон</text>
<text x="857.1" y="475.8" font-size="7.4" text-anchor="start" fill="#fff" fill-opacity="0.8" stroke="#fff" stroke-width="2.0" stroke-linejoin="round" stroke-opacity="0.8">Barberton</text>
<text x="857.1" y="475.8" font-size="7.4" text-anchor="start" fill="#484848" stroke="#484848" stroke-width="0.22">Barberton</text>
<circle cx="794.2" cy="517.2" r="1.3" fill="#fff" stroke="#666" stroke-width="0.6"/>
<text x="797.1" y="516.7" font-size="7.4" text-anchor="start" fill="#fff" fill-opacity="0.8" stroke="#fff" stroke-width="2.0" stroke-linejoin="round" stroke-opacity="0.8">Эрмело</text>
<text x="797.1" y="516.7" font-size="7.4" text-anchor="start" fill="#484848" stroke="#484848" stroke-width="0.22">Эрмело</text>
<text x="797.1" y="524.1" font-size="7.4" text-anchor="start" fill="#fff" fill-opacity="0.8" stroke="#fff" stroke-width="2.0" stroke-linejoin="round" stroke-opacity="0.8">Ermelo</text>
<text x="797.1" y="524.1" font-size="7.4" text-anchor="start" fill="#484848" stroke="#484848" stroke-width="0.22">Ermelo</text>
<text x="849.7" y="524.7" font-size="12.8" text-anchor="start" fill="#fff" fill-opacity="0.8" font-weight="bold" stroke="#fff" stroke-width="2.4" stroke-linejoin="round" stroke-opacity="0.8">Эсватини</text>
<text x="849.7" y="524.7" font-size="12.8" text-anchor="start" fill="#222" font-weight="bold" stroke="#222" stroke-width="0.1">Эсватини</text>
<circle cx="607.2" cy="538.9" r="1.3" fill="#fff" stroke="#666" stroke-width="0.6"/>
<text x="610.1" y="538.0" font-size="7.4" text-anchor="start" fill="#fff" fill-opacity="0.8" stroke="#fff" stroke-width="2.0" stroke-linejoin="round" stroke-opacity="0.8">Клерксдорп</text>
<text x="610.1" y="538.0" font-size="7.4" text-anchor="start" fill="#484848" stroke="#484848" stroke-width="0.22">Клерксдорп</text>
<text x="610.1" y="545.8" font-size="7.4" text-anchor="start" fill="#fff" fill-opacity="0.8" stroke="#fff" stroke-width="2.0" stroke-linejoin="round" stroke-opacity="0.8">Klerksdorp</text>
<text x="610.1" y="545.8" font-size="7.4" text-anchor="start" fill="#484848" stroke="#484848" stroke-width="0.22">Klerksdorp</text>
<circle cx="793.3" cy="593.7" r="1.3" fill="#fff" stroke="#666" stroke-width="0.6"/>
<text x="796.2" y="592.8" font-size="7.4" text-anchor="start" fill="#fff" fill-opacity="0.8" stroke="#fff" stroke-width="2.0" stroke-linejoin="round" stroke-opacity="0.8">Ньюкасл</text>
<text x="796.2" y="592.8" font-size="7.4" text-anchor="start" fill="#484848" stroke="#484848" stroke-width="0.22">Ньюкасл</text>
<text x="796.2" y="600.6" font-size="7.4" text-anchor="start" fill="#fff" fill-opacity="0.8" stroke="#fff" stroke-width="2.0" stroke-linejoin="round" stroke-opacity="0.8">Newcastle</text>
<text x="796.2" y="600.6" font-size="7.4" text-anchor="start" fill="#484848" stroke="#484848" stroke-width="0.22">Newcastle</text>
<circle cx="612.4" cy="610.2" r="1.3" fill="#fff" stroke="#666" stroke-width="0.6"/>
<text x="615.3" y="609.7" font-size="7.4" text-anchor="start" fill="#fff" fill-opacity="0.8" stroke="#fff" stroke-width="2.0" stroke-linejoin="round" stroke-opacity="0.8">Велком</text>
<text x="615.3" y="609.7" font-size="7.4" text-anchor="start" fill="#484848" stroke="#484848" stroke-width="0.22">Велком</text>
<text x="615.3" y="617.5" font-size="7.4" text-anchor="start" fill="#fff" fill-opacity="0.8" stroke="#fff" stroke-width="2.0" stroke-linejoin="round" stroke-opacity="0.8">Welkom</text>
<text x="615.3" y="617.5" font-size="7.4" text-anchor="start" fill="#484848" stroke="#484848" stroke-width="0.22">Welkom</text>
<text x="878.0" y="629.2" font-size="7.4" text-anchor="start" fill="#fff" fill-opacity="0.8" stroke="#fff" stroke-width="2.0" stroke-linejoin="round" stroke-opacity="0.8">Улунди</text>
<text x="878.0" y="629.2" font-size="7.4" text-anchor="start" fill="#484848" stroke="#484848" stroke-width="0.22">Улунди</text>
<text x="953.4" y="284.1" font-size="8.7" text-anchor="middle" fill="#3d9c78" stroke="#3d9c78" stroke-width="0.25">Banhine</text>
<text x="953.4" y="292.8" font-size="8.7" text-anchor="middle" fill="#3d9c78" stroke="#3d9c78" stroke-width="0.25">National Park</text>
<circle cx="1041.0" cy="303.9" r="1.3" fill="#fff" stroke="#666" stroke-width="0.6"/>
<text x="1043.5" y="306.6" font-size="7.4" text-anchor="start" fill="#fff" fill-opacity="0.8" stroke="#fff" stroke-width="2.0" stroke-linejoin="round" stroke-opacity="0.8">Funhalouro</text>
<text x="1043.5" y="306.6" font-size="7.4" text-anchor="start" fill="#484848" stroke="#484848" stroke-width="0.22">Funhalouro</text>
<circle cx="1097.8" cy="319.3" r="1.3" fill="#fff" stroke="#666" stroke-width="0.6"/>
<text x="1100.0" y="322.3" font-size="7.4" text-anchor="start" fill="#fff" fill-opacity="0.8" stroke="#fff" stroke-width="2.0" stroke-linejoin="round" stroke-opacity="0.8">Massinga</text>
<text x="1100.0" y="322.3" font-size="7.4" text-anchor="start" fill="#484848" stroke="#484848" stroke-width="0.22">Massinga</text>
<circle cx="1099.4" cy="353.0" r="1.3" fill="#fff" stroke="#666" stroke-width="0.6"/>
<text x="1096.9" y="352.0" font-size="7.4" text-anchor="end" fill="#fff" fill-opacity="0.8" stroke="#fff" stroke-width="2.0" stroke-linejoin="round" stroke-opacity="0.8">Иньямбане</text>
<text x="1096.9" y="352.0" font-size="7.4" text-anchor="end" fill="#484848" stroke="#484848" stroke-width="0.22">Иньямбане</text>
<text x="1096.9" y="359.1" font-size="7.4" text-anchor="end" fill="#fff" fill-opacity="0.8" stroke="#fff" stroke-width="2.0" stroke-linejoin="round" stroke-opacity="0.8">Inhambane</text>
<text x="1096.9" y="359.1" font-size="7.4" text-anchor="end" fill="#484848" stroke="#484848" stroke-width="0.22">Inhambane</text>
<circle cx="1107.7" cy="351.1" r="1.3" fill="#fff" stroke="#666" stroke-width="0.6"/>
<text x="1110.5" y="350.4" font-size="7.4" text-anchor="start" fill="#fff" fill-opacity="0.8" stroke="#fff" stroke-width="2.0" stroke-linejoin="round" stroke-opacity="0.8">Тофу</text>
<text x="1110.5" y="350.4" font-size="7.4" text-anchor="start" fill="#484848" stroke="#484848" stroke-width="0.22">Тофу</text>
<text x="1110.5" y="358.1" font-size="7.4" text-anchor="start" fill="#fff" fill-opacity="0.8" stroke="#fff" stroke-width="2.0" stroke-linejoin="round" stroke-opacity="0.8">Praia Tofo</text>
<text x="1110.5" y="358.1" font-size="7.4" text-anchor="start" fill="#484848" stroke="#484848" stroke-width="0.22">Praia Tofo</text>
<circle cx="1078.4" cy="390.3" r="1.3" fill="#fff" stroke="#666" stroke-width="0.6"/>
<text x="1080.9" y="393.0" font-size="7.4" text-anchor="start" fill="#fff" fill-opacity="0.8" stroke="#fff" stroke-width="2.0" stroke-linejoin="round" stroke-opacity="0.8">Inharrime</text>
<text x="1080.9" y="393.0" font-size="7.4" text-anchor="start" fill="#484848" stroke="#484848" stroke-width="0.22">Inharrime</text>
<circle cx="994.4" cy="403.3" r="1.3" fill="#fff" stroke="#666" stroke-width="0.6"/>
<text x="996.9" y="406.3" font-size="7.4" text-anchor="start" fill="#fff" fill-opacity="0.8" stroke="#fff" stroke-width="2.0" stroke-linejoin="round" stroke-opacity="0.8">Chibuto</text>
<text x="996.9" y="406.3" font-size="7.4" text-anchor="start" fill="#484848" stroke="#484848" stroke-width="0.22">Chibuto</text>
<circle cx="1003.1" cy="425.8" r="1.3" fill="#fff" stroke="#666" stroke-width="0.6"/>
<text x="1006.2" y="425.1" font-size="7.4" text-anchor="start" fill="#fff" fill-opacity="0.8" stroke="#fff" stroke-width="2.0" stroke-linejoin="round" stroke-opacity="0.8">Шаи-Шаи</text>
<text x="1006.2" y="425.1" font-size="7.4" text-anchor="start" fill="#484848" stroke="#484848" stroke-width="0.22">Шаи-Шаи</text>
<text x="1006.2" y="432.2" font-size="7.4" text-anchor="start" fill="#fff" fill-opacity="0.8" stroke="#fff" stroke-width="2.0" stroke-linejoin="round" stroke-opacity="0.8">Xai-Xai</text>
<text x="1006.2" y="432.2" font-size="7.4" text-anchor="start" fill="#484848" stroke="#484848" stroke-width="0.22">Xai-Xai</text>
<text x="1085.0" y="256.7" font-size="7.4" text-anchor="start" fill="#fff" fill-opacity="0.8" stroke="#fff" stroke-width="2.0" stroke-linejoin="round" stroke-opacity="0.8">Mapinhane</text>
<text x="1085.0" y="256.7" font-size="7.4" text-anchor="start" fill="#484848" stroke="#484848" stroke-width="0.22">Mapinhane</text>
<circle cx="952.8" cy="446.9" r="1.3" fill="#fff" stroke="#666" stroke-width="0.6"/>
<text x="955.1" y="449.9" font-size="7.4" text-anchor="start" fill="#fff" fill-opacity="0.8" stroke="#fff" stroke-width="2.0" stroke-linejoin="round" stroke-opacity="0.8">Manhica</text>
<text x="955.1" y="449.9" font-size="7.4" text-anchor="start" fill="#666" stroke="#666" stroke-width="0.22">Manhica</text>
<circle cx="940.2" cy="482.5" r="2.1" fill="#fff" stroke="#333" stroke-width="0.8"/><circle cx="940.2" cy="482.5" r="0.9" fill="#333"/>
<text x="943.8" y="481.6" font-size="10" text-anchor="start" fill="#fff" fill-opacity="0.8" stroke="#fff" stroke-width="2.0" stroke-linejoin="round" stroke-opacity="0.8">Мапуту</text>
<text x="943.8" y="481.6" font-size="10" text-anchor="start" fill="#2e2e2e" stroke="#2e2e2e" stroke-width="0.3">Мапуту</text>
<text x="943.8" y="491.3" font-size="10" text-anchor="start" fill="#fff" fill-opacity="0.8" stroke="#fff" stroke-width="2.0" stroke-linejoin="round" stroke-opacity="0.8">Maputo</text>
<text x="943.8" y="491.3" font-size="10" text-anchor="start" fill="#2e2e2e" stroke="#2e2e2e" stroke-width="0.3">Maputo</text>
<path d="M688.7 475L692.4 487.8L696.100 475Z" fill="#9aa0a6" stroke="#80868c" stroke-width="0.4"/>
<circle cx="692.4" cy="467.8" r="8.5" fill="url(#mk)" stroke="#8a9096" stroke-width="1.2"/>
<g transform="translate(692.4 467.300)"><path d="M-7.3 1.300L-6.900 -0.500Q-6.700 -1 -6 -1.100L-4 -1.400L-2.300 -3.300Q-1.900 -3.700 -1.300 -3.700H2.200Q2.900 -3.700 3.400 -3.300L5.200 -1.500L6.800 -1.100Q7.300 -1 7.300 -0.400V1.600Q7.300 2.300 6.600 2.300H-6.600Q-7.300 2.300 -7.300 1.600Z" fill="#fff"/><path d="M-3.300 -1.500L-1.900 -3H-0.200V-1.500ZM0.500 -1.500V-3H2.100L3.700 -1.500Z" fill="#3aa7d8"/><circle cx="-4.300" cy="2.200" r="1.500" fill="#fff" stroke="#1d8ec6" stroke-width="0.6"/><circle cx="4.300" cy="2.200" r="1.500" fill="#fff" stroke="#1d8ec6" stroke-width="0.6"/></g>
<rect x="1014.2" y="261.6" width="105" height="18.6" fill="#fff"/>
<rect x="1022.4" y="267.4" width="6.6" height="6.6" rx="1" fill="#fff" stroke="#767676" stroke-width="0.7"/>
<text x="1031.8" y="273.2" font-size="6.7" fill="#222">Street view</text>
<text x="1070.4" y="273.2" font-size="6.9" fill="#1a73c8" text-decoration="underline">GSV</text>
<text x="1094.4" y="273.2" font-size="6.9" fill="#1a73c8" text-decoration="underline">OSC</text>
<rect x="1121.3" y="261.6" width="41.7" height="18.6" fill="#fff"/>
<rect x="1128" y="267.400" width="6.6" height="6.6" rx="1" fill="#fff" stroke="#767676" stroke-width="0.7"/>
<text x="1138" y="273.2" font-size="6.7" fill="#222">Traffic</text>
<rect x="1164.800" y="261.6" width="25.2" height="18.6" fill="#fff"/>
<path d="M1170 273.8L1178.5 269.6L1187 273.8L1178.5 278.0Z" fill="#8f8f8f" stroke="#fff" stroke-width="0.5"/>
<path d="M1170 271.7L1178.5 267.5L1187 271.7L1178.5 275.9Z" fill="#b5b5b5" stroke="#fff" stroke-width="0.5"/>
<path d="M1170 269.6L1178.5 265.4L1187 269.6L1178.5 273.8Z" fill="#dcdcdc" stroke="#fff" stroke-width="0.5"/>
<rect x="148" y="262" width="19" height="37" rx="1.8" fill="#104c81"/><rect x="148" y="280.100" width="19" height="0.7" fill="#4f7fab"/>
<path d="M153.400 271.200h8.200M157.500 267.100v8.200M153.600 290h7.800" stroke="#fff" stroke-width="1.25" fill="none"/>
<rect x="148" y="305.200" width="19" height="18.800" rx="1.8" fill="#104c81"/>
<g transform="translate(157.500 314.600)"><g transform="rotate(45)"><rect x="-5.600" y="-1.500" width="11.200" height="3" rx="0.500" fill="#fff"/><path d="M-3.500 -1.500v1.400M-1.200 -1.500v1.400M1.100 -1.500v1.400M3.400 -1.500v1.400" stroke="#104c81" stroke-width="0.500"/></g><g transform="rotate(-45)"><rect x="-6" y="-1.900" width="12" height="3.800" fill="#104c81"/><path d="M-5.800 0L-3.600 -1.300H3.400V1.300H-3.600Z" fill="#fff"/><rect x="4" y="-1.300" width="1.700" height="2.600" rx="0.400" fill="#fff"/></g></g>
<rect x="148" y="330" width="19" height="19" rx="1.800" fill="#104c81"/>
<g transform="translate(157.500 339.500) scale(1.2) translate(-157.500 -339.800)"><path d="M154.800 336h5.400v2.200h-5.400zM153 338.800h9v3.600h-1.700v-1.600h-5.600v1.600H153zM155.400 341.500h4.200v2.300h-4.200z" fill="#fff"/></g>
</svg></div>
<i class="abs" style="left:663.5px;top:235.8px;border:3px solid transparent;border-top:2.6px solid #9a9a9a;border-bottom:0"></i>
<i class="abs" style="left:1175px;top:246px;border:3.2px solid transparent;border-top:3.6px solid #e8eef5;border-bottom:0"></i>
<!--OVER-->
</body>
</html>
